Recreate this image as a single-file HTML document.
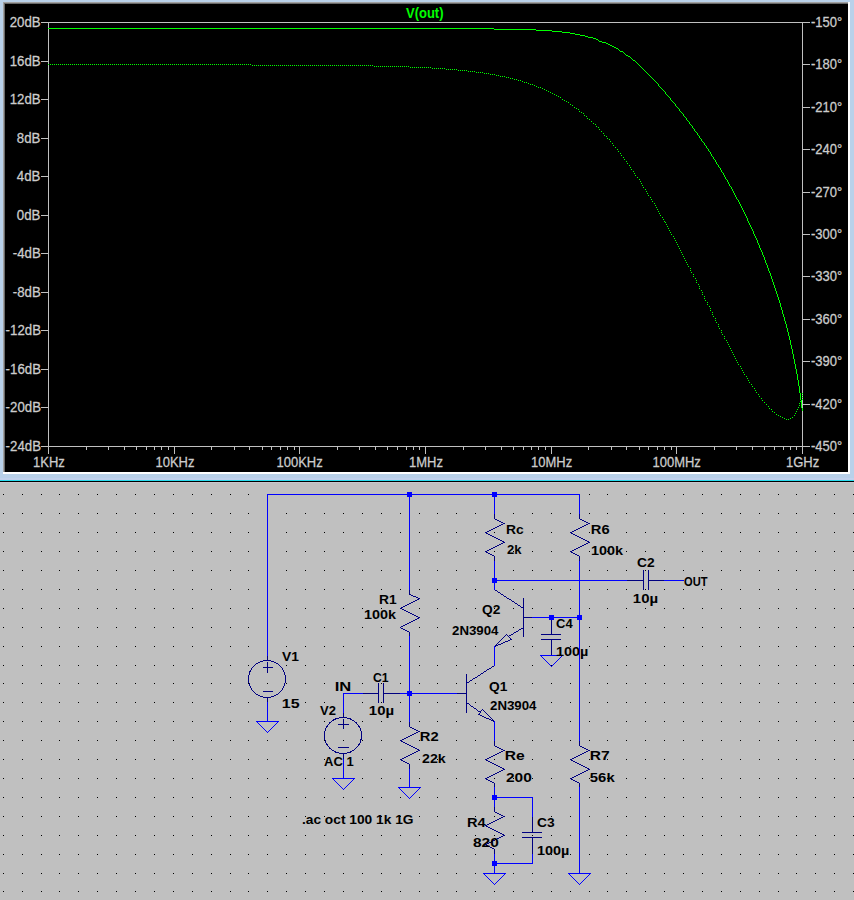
<!DOCTYPE html>
<html><head><meta charset="utf-8"><style>
html,body{margin:0;padding:0;width:854px;height:900px;overflow:hidden;background:#b9d1ea}
svg{display:block}
.ax{font-family:"Liberation Sans",sans-serif;font-size:13px;fill:#cccccc;stroke:#cccccc;stroke-width:0.25px}
.title{font-family:"Liberation Sans",sans-serif;font-size:13px;font-weight:bold;fill:#00ff00}
.sc{font-family:"Liberation Sans",sans-serif;font-size:13px;font-weight:bold;fill:#000}
</style></head><body>
<svg width="854" height="900" viewBox="0 0 854 900">
<rect x="0" y="0" width="854" height="900" fill="#b9d1ea"/><rect x="3" y="2" width="847" height="472" fill="#ffffff"/><rect x="3" y="2" width="845" height="470" fill="#a0a0a0"/><rect x="4" y="3" width="844" height="469" fill="#696969"/><rect x="5" y="4" width="843" height="468" fill="#000000"/><rect x="0" y="478" width="854" height="2" fill="#c2d2ee"/><rect x="0" y="480" width="854" height="1" fill="#28dcef"/><rect x="0" y="481" width="854" height="1" fill="#000000"/><rect x="0" y="482" width="854" height="418" fill="#c0c0c0"/><rect x="0" y="482" width="854" height="1" fill="#c8c8d0"/><rect x="41" y="22" width="769" height="1" fill="#c0c0c0"/><rect x="41" y="446" width="769" height="1" fill="#c0c0c0"/><rect x="48" y="22" width="1" height="432" fill="#c0c0c0"/><rect x="802" y="22" width="1" height="432" fill="#c0c0c0"/><rect x="41" y="22" width="7" height="1" fill="#c0c0c0"/><rect x="41" y="61" width="7" height="1" fill="#c0c0c0"/><rect x="41" y="99" width="7" height="1" fill="#c0c0c0"/><rect x="41" y="138" width="7" height="1" fill="#c0c0c0"/><rect x="41" y="176" width="7" height="1" fill="#c0c0c0"/><rect x="41" y="215" width="7" height="1" fill="#c0c0c0"/><rect x="41" y="253" width="7" height="1" fill="#c0c0c0"/><rect x="41" y="292" width="7" height="1" fill="#c0c0c0"/><rect x="41" y="330" width="7" height="1" fill="#c0c0c0"/><rect x="41" y="369" width="7" height="1" fill="#c0c0c0"/><rect x="41" y="407" width="7" height="1" fill="#c0c0c0"/><rect x="41" y="446" width="7" height="1" fill="#c0c0c0"/><rect x="803" y="22" width="7" height="1" fill="#c0c0c0"/><rect x="803" y="64" width="7" height="1" fill="#c0c0c0"/><rect x="803" y="107" width="7" height="1" fill="#c0c0c0"/><rect x="803" y="149" width="7" height="1" fill="#c0c0c0"/><rect x="803" y="192" width="7" height="1" fill="#c0c0c0"/><rect x="803" y="234" width="7" height="1" fill="#c0c0c0"/><rect x="803" y="276" width="7" height="1" fill="#c0c0c0"/><rect x="803" y="319" width="7" height="1" fill="#c0c0c0"/><rect x="803" y="361" width="7" height="1" fill="#c0c0c0"/><rect x="803" y="404" width="7" height="1" fill="#c0c0c0"/><rect x="803" y="446" width="7" height="1" fill="#c0c0c0"/><rect x="48" y="446" width="1" height="8" fill="#c0c0c0"/><rect x="86" y="447" width="1" height="3" fill="#c0c0c0"/><rect x="108" y="447" width="1" height="3" fill="#c0c0c0"/><rect x="124" y="447" width="1" height="3" fill="#c0c0c0"/><rect x="136" y="447" width="1" height="3" fill="#c0c0c0"/><rect x="146" y="447" width="1" height="3" fill="#c0c0c0"/><rect x="154" y="447" width="1" height="3" fill="#c0c0c0"/><rect x="161" y="447" width="1" height="3" fill="#c0c0c0"/><rect x="168" y="447" width="1" height="3" fill="#c0c0c0"/><rect x="174" y="446" width="1" height="8" fill="#c0c0c0"/><rect x="211" y="447" width="1" height="3" fill="#c0c0c0"/><rect x="234" y="447" width="1" height="3" fill="#c0c0c0"/><rect x="249" y="447" width="1" height="3" fill="#c0c0c0"/><rect x="262" y="447" width="1" height="3" fill="#c0c0c0"/><rect x="271" y="447" width="1" height="3" fill="#c0c0c0"/><rect x="280" y="447" width="1" height="3" fill="#c0c0c0"/><rect x="287" y="447" width="1" height="3" fill="#c0c0c0"/><rect x="294" y="447" width="1" height="3" fill="#c0c0c0"/><rect x="299" y="446" width="1" height="8" fill="#c0c0c0"/><rect x="337" y="447" width="1" height="3" fill="#c0c0c0"/><rect x="359" y="447" width="1" height="3" fill="#c0c0c0"/><rect x="375" y="447" width="1" height="3" fill="#c0c0c0"/><rect x="387" y="447" width="1" height="3" fill="#c0c0c0"/><rect x="397" y="447" width="1" height="3" fill="#c0c0c0"/><rect x="406" y="447" width="1" height="3" fill="#c0c0c0"/><rect x="413" y="447" width="1" height="3" fill="#c0c0c0"/><rect x="419" y="447" width="1" height="3" fill="#c0c0c0"/><rect x="425" y="446" width="1" height="8" fill="#c0c0c0"/><rect x="463" y="447" width="1" height="3" fill="#c0c0c0"/><rect x="485" y="447" width="1" height="3" fill="#c0c0c0"/><rect x="501" y="447" width="1" height="3" fill="#c0c0c0"/><rect x="513" y="447" width="1" height="3" fill="#c0c0c0"/><rect x="523" y="447" width="1" height="3" fill="#c0c0c0"/><rect x="531" y="447" width="1" height="3" fill="#c0c0c0"/><rect x="538" y="447" width="1" height="3" fill="#c0c0c0"/><rect x="545" y="447" width="1" height="3" fill="#c0c0c0"/><rect x="551" y="446" width="1" height="8" fill="#c0c0c0"/><rect x="588" y="447" width="1" height="3" fill="#c0c0c0"/><rect x="611" y="447" width="1" height="3" fill="#c0c0c0"/><rect x="626" y="447" width="1" height="3" fill="#c0c0c0"/><rect x="639" y="447" width="1" height="3" fill="#c0c0c0"/><rect x="648" y="447" width="1" height="3" fill="#c0c0c0"/><rect x="657" y="447" width="1" height="3" fill="#c0c0c0"/><rect x="664" y="447" width="1" height="3" fill="#c0c0c0"/><rect x="671" y="447" width="1" height="3" fill="#c0c0c0"/><rect x="676" y="446" width="1" height="8" fill="#c0c0c0"/><rect x="714" y="447" width="1" height="3" fill="#c0c0c0"/><rect x="736" y="447" width="1" height="3" fill="#c0c0c0"/><rect x="752" y="447" width="1" height="3" fill="#c0c0c0"/><rect x="764" y="447" width="1" height="3" fill="#c0c0c0"/><rect x="774" y="447" width="1" height="3" fill="#c0c0c0"/><rect x="783" y="447" width="1" height="3" fill="#c0c0c0"/><rect x="790" y="447" width="1" height="3" fill="#c0c0c0"/><rect x="796" y="447" width="1" height="3" fill="#c0c0c0"/><rect x="802" y="446" width="1" height="8" fill="#c0c0c0"/><path d="M48 64h1v1h-1zM50 64h1v1h-1zM52 64h1v1h-1zM54 64h1v1h-1zM56 64h1v1h-1zM58 64h1v1h-1zM60 64h1v1h-1zM62 64h1v1h-1zM64 64h1v1h-1zM66 64h1v1h-1zM68 64h1v1h-1zM70 64h1v1h-1zM72 64h1v1h-1zM74 64h1v1h-1zM76 64h1v1h-1zM78 64h1v1h-1zM80 64h1v1h-1zM82 64h1v1h-1zM84 64h1v1h-1zM86 64h1v1h-1zM88 64h1v1h-1zM90 64h1v1h-1zM92 64h1v1h-1zM94 64h1v1h-1zM96 64h1v1h-1zM98 64h1v1h-1zM100 64h1v1h-1zM102 64h1v1h-1zM104 64h1v1h-1zM106 64h1v1h-1zM108 64h1v1h-1zM110 64h1v1h-1zM112 64h1v1h-1zM114 64h1v1h-1zM116 64h1v1h-1zM118 64h1v1h-1zM120 64h1v1h-1zM122 64h1v1h-1zM124 64h1v1h-1zM126 64h1v1h-1zM128 64h1v1h-1zM130 64h1v1h-1zM132 64h1v1h-1zM134 64h1v1h-1zM136 64h1v1h-1zM138 64h1v1h-1zM140 64h1v1h-1zM142 64h1v1h-1zM144 64h1v1h-1zM146 64h1v1h-1zM148 64h1v1h-1zM150 64h1v1h-1zM152 64h1v1h-1zM154 64h1v1h-1zM156 64h1v1h-1zM158 64h1v1h-1zM160 64h1v1h-1zM162 64h1v1h-1zM164 64h1v1h-1zM166 64h1v1h-1zM168 64h1v1h-1zM170 64h1v1h-1zM172 64h1v1h-1zM174 64h1v1h-1zM176 64h1v1h-1zM178 64h1v1h-1zM180 64h1v1h-1zM182 64h1v1h-1zM184 64h1v1h-1zM186 64h1v1h-1zM188 64h1v1h-1zM190 64h1v1h-1zM192 64h1v1h-1zM194 64h1v1h-1zM196 64h1v1h-1zM198 64h1v1h-1zM200 64h1v1h-1zM202 64h1v1h-1zM204 64h1v1h-1zM206 64h1v1h-1zM208 64h1v1h-1zM210 64h1v1h-1zM212 64h1v1h-1zM214 64h1v1h-1zM216 64h1v1h-1zM218 64h1v1h-1zM220 64h1v1h-1zM222 64h1v1h-1zM224 64h1v1h-1zM226 64h1v1h-1zM228 64h1v1h-1zM230 64h1v1h-1zM232 64h1v1h-1zM234 64h1v1h-1zM236 64h1v1h-1zM238 64h1v1h-1zM240 64h1v1h-1zM242 64h1v1h-1zM244 64h1v1h-1zM246 64h1v1h-1zM248 64h1v1h-1zM250 64h1v1h-1zM252 65h1v1h-1zM254 65h1v1h-1zM256 65h1v1h-1zM258 65h1v1h-1zM260 65h1v1h-1zM262 65h1v1h-1zM264 65h1v1h-1zM266 65h1v1h-1zM268 65h1v1h-1zM270 65h1v1h-1zM272 65h1v1h-1zM274 65h1v1h-1zM276 65h1v1h-1zM278 65h1v1h-1zM280 65h1v1h-1zM282 65h1v1h-1zM284 65h1v1h-1zM286 65h1v1h-1zM288 65h1v1h-1zM290 65h1v1h-1zM292 65h1v1h-1zM294 65h1v1h-1zM296 65h1v1h-1zM298 65h1v1h-1zM300 65h1v1h-1zM302 65h1v1h-1zM304 65h1v1h-1zM306 65h1v1h-1zM308 65h1v1h-1zM310 65h1v1h-1zM312 65h1v1h-1zM314 65h1v1h-1zM316 65h1v1h-1zM318 65h1v1h-1zM320 65h1v1h-1zM322 65h1v1h-1zM324 65h1v1h-1zM326 65h1v1h-1zM328 65h1v1h-1zM330 65h1v1h-1zM332 65h1v1h-1zM334 65h1v1h-1zM336 65h1v1h-1zM338 65h1v1h-1zM340 65h1v1h-1zM342 65h1v1h-1zM344 65h1v1h-1zM346 65h1v1h-1zM348 65h1v1h-1zM350 65h1v1h-1zM352 65h1v1h-1zM354 65h1v1h-1zM356 65h1v1h-1zM358 65h1v1h-1zM360 65h1v1h-1zM362 65h1v1h-1zM364 65h1v1h-1zM366 65h1v1h-1zM368 65h1v1h-1zM370 65h1v1h-1zM372 65h1v1h-1zM374 66h1v1h-1zM376 66h1v1h-1zM378 66h1v1h-1zM380 66h1v1h-1zM382 66h1v1h-1zM384 66h1v1h-1zM386 66h1v1h-1zM388 66h1v1h-1zM390 66h1v1h-1zM392 66h1v1h-1zM394 66h1v1h-1zM396 66h1v1h-1zM398 66h1v1h-1zM400 66h1v1h-1zM402 66h1v1h-1zM404 66h1v1h-1zM406 66h1v1h-1zM408 66h1v1h-1zM410 67h1v1h-1zM412 67h1v1h-1zM414 67h1v1h-1zM416 67h1v1h-1zM418 67h1v1h-1zM420 67h1v1h-1zM422 67h1v1h-1zM424 67h1v1h-1zM426 67h1v1h-1zM428 67h1v1h-1zM430 67h1v1h-1zM432 68h1v1h-1zM434 68h1v1h-1zM436 68h1v1h-1zM438 68h1v1h-1zM440 68h1v1h-1zM442 68h1v1h-1zM444 68h1v1h-1zM446 69h1v1h-1zM448 69h1v1h-1zM450 69h1v1h-1zM452 69h1v1h-1zM454 69h1v1h-1zM456 69h1v1h-1zM458 70h1v1h-1zM460 70h1v1h-1zM462 70h1v1h-1zM464 70h1v1h-1zM466 70h1v1h-1zM468 71h1v1h-1zM470 71h1v1h-1zM472 71h1v1h-1zM474 71h1v1h-1zM476 72h1v1h-1zM478 72h1v1h-1zM480 72h1v1h-1zM482 72h1v1h-1zM484 73h1v1h-1zM486 73h1v1h-1zM488 73h1v1h-1zM490 74h1v1h-1zM492 74h1v1h-1zM494 74h1v1h-1zM496 75h1v1h-1zM498 75h1v1h-1zM500 76h1v1h-1zM502 76h1v1h-1zM504 76h1v1h-1zM506 77h1v1h-1zM508 77h1v1h-1zM510 78h1v1h-1zM512 78h1v1h-1zM514 79h1v1h-1zM516 79h1v1h-1zM518 80h1v1h-1zM520 80h1v1h-1zM522 81h1v1h-1zM524 82h1v1h-1zM526 82h1v1h-1zM528 83h1v1h-1zM530 84h1v1h-1zM532 84h1v1h-1zM534 85h1v1h-1zM536 86h1v1h-1zM538 87h1v1h-1zM540 87h1v1h-1zM542 88h1v1h-1zM544 89h1v1h-1zM546 90h1v1h-1zM548 91h1v1h-1zM550 92h1v1h-1zM552 93h1v1h-1zM554 94h1v1h-1zM556 95h1v1h-1zM558 96h1v1h-1zM560 97h1v1h-1zM562 99h1v1h-1zM564 100h1v1h-1zM566 101h1v1h-1zM568 102h1v1h-1zM570 104h1v1h-1zM572 105h1v1h-1zM574 107h1v1h-1zM576 108h1v1h-1zM578 109h1v1h-1zM579 111h1v1h-1zM581 112h1v1h-1zM583 113h1v1h-1zM584 115h1v1h-1zM586 116h1v1h-1zM587 118h1v1h-1zM589 119h1v1h-1zM591 121h1v1h-1zM593 123h1v1h-1zM595 124h1v1h-1zM596 126h1v1h-1zM598 127h1v1h-1zM599 129h1v1h-1zM601 131h1v1h-1zM603 133h1v1h-1zM604 135h1v1h-1zM606 136h1v1h-1zM607 138h1v1h-1zM609 139h1v1h-1zM610 141h1v1h-1zM612 143h1v1h-1zM613 145h1v1h-1zM615 147h1v1h-1zM617 149h1v1h-1zM618 151h1v1h-1zM620 153h1v1h-1zM621 155h1v1h-1zM623 157h1v1h-1zM624 159h1v1h-1zM626 161h1v1h-1zM627 163h1v1h-1zM629 165h1v1h-1zM630 167h1v1h-1zM631 169h1v1h-1zM633 171h1v1h-1zM634 173h1v1h-1zM635 175h1v1h-1zM637 177h1v1h-1zM639 179h1v1h-1zM640 181h1v1h-1zM641 183h1v1h-1zM642 185h1v1h-1zM643 187h1v1h-1zM645 189h1v1h-1zM646 191h1v1h-1zM647 193h1v1h-1zM648 195h1v1h-1zM650 197h1v1h-1zM651 199h1v1h-1zM652 201h1v1h-1zM654 203h1v1h-1zM655 205h1v1h-1zM656 207h1v1h-1zM657 209h1v1h-1zM658 211h1v1h-1zM659 213h1v1h-1zM660 215h1v1h-1zM662 217h1v1h-1zM663 219h1v1h-1zM664 221h1v1h-1zM665 222h1v1h-1zM666 224h1v1h-1zM667 226h1v1h-1zM668 228h1v1h-1zM669 230h1v1h-1zM670 232h1v1h-1zM671 234h1v1h-1zM673 236h1v1h-1zM674 238h1v1h-1zM675 240h1v1h-1zM676 242h1v1h-1zM677 244h1v1h-1zM678 246h1v1h-1zM679 248h1v1h-1zM680 250h1v1h-1zM681 252h1v1h-1zM682 254h1v1h-1zM683 256h1v1h-1zM684 258h1v1h-1zM685 260h1v1h-1zM686 262h1v1h-1zM687 264h1v1h-1zM688 266h1v1h-1zM690 268h1v1h-1zM690 270h1v1h-1zM691 272h1v1h-1zM693 274h1v1h-1zM693 276h1v1h-1zM695 278h1v1h-1zM696 280h1v1h-1zM696 282h1v1h-1zM698 284h1v1h-1zM699 286h1v1h-1zM699 288h1v1h-1zM701 290h1v1h-1zM702 292h1v1h-1zM702 294h1v1h-1zM704 296h1v1h-1zM704 298h1v1h-1zM705 300h1v1h-1zM707 302h1v1h-1zM707 304h1v1h-1zM709 306h1v1h-1zM710 308h1v1h-1zM710 310h1v1h-1zM712 312h1v1h-1zM712 314h1v1h-1zM713 316h1v1h-1zM715 318h1v1h-1zM715 320h1v1h-1zM716 322h1v1h-1zM718 324h1v1h-1zM718 326h1v1h-1zM719 328h1v1h-1zM721 330h1v1h-1zM721 332h1v1h-1zM722 334h1v1h-1zM724 336h1v1h-1zM724 338h1v1h-1zM726 340h1v1h-1zM727 342h1v1h-1zM728 344h1v1h-1zM729 346h1v1h-1zM730 348h1v1h-1zM731 350h1v1h-1zM732 352h1v1h-1zM733 354h1v1h-1zM734 356h1v1h-1zM735 358h1v1h-1zM736 360h1v1h-1zM737 362h1v1h-1zM738 364h1v1h-1zM740 366h1v1h-1zM741 368h1v1h-1zM742 370h1v1h-1zM743 372h1v1h-1zM744 374h1v1h-1zM746 376h1v1h-1zM747 378h1v1h-1zM748 380h1v1h-1zM749 382h1v1h-1zM751 384h1v1h-1zM752 386h1v1h-1zM754 388h1v1h-1zM755 390h1v1h-1zM756 392h1v1h-1zM802 393h1v1h-1zM758 394h1v1h-1zM802 395h1v1h-1zM759 396h1v1h-1zM802 397h1v1h-1zM761 398h1v1h-1zM802 399h1v1h-1zM762 400h1v1h-1zM800 401h1v1h-1zM764 402h1v1h-1zM799 403h1v1h-1zM766 404h1v1h-1zM799 405h1v1h-1zM768 406h1v1h-1zM798 407h1v1h-1zM769 408h1v1h-1zM771 409h1v1h-1zM797 409h1v1h-1zM772 411h1v1h-1zM796 411h1v1h-1zM774 412h1v1h-1zM795 413h1v1h-1zM776 414h1v1h-1zM778 415h1v1h-1zM794 415h1v1h-1zM780 416h1v1h-1zM782 417h1v1h-1zM792 417h1v1h-1zM784 418h1v1h-1zM790 418h1v1h-1zM786 419h1v1h-1zM788 419h1v1h-1z" fill="#00ff00"/><path d="M48 28h446v1h-446zM494 29h42v1h-42zM536 30h16v1h-16zM552 31h10v1h-10zM562 32h8v1h-8zM570 33h5v1h-5zM575 34h5v1h-5zM580 35h5v1h-5zM585 36h3v1h-3zM588 37h5v1h-5zM593 38h3v1h-3zM596 39h2v1h-2zM598 40h1v1h-1zM599 41h3v1h-3zM602 42h4v1h-4zM606 43h2v1h-2zM608 44h2v1h-2zM610 45h2v1h-2zM612 46h2v1h-2zM614 47h2v1h-2zM616 48h2v1h-2zM618 49h1v1h-1zM619 50h1v1h-1zM620 51h3v1h-3zM623 52h1v1h-1zM624 53h1v1h-1zM625 54h1v1h-1zM626 55h2v1h-2zM628 56h2v1h-2zM630 57h1v1h-1zM631 58h1v1h-1zM632 59h1v1h-1zM633 60h2v1h-2zM635 61h1v1h-1zM636 62h1v1h-1zM637 63h1v1h-1zM638 64h1v1h-1zM639 65h1v1h-1zM640 66h1v1h-1zM641 67h1v1h-1zM642 68h1v1h-1zM643 69h1v1h-1zM644 70h1v1h-1zM645 71h1v1h-1zM646 72h1v1h-1zM647 73h1v1h-1zM648 74h1v1h-1zM649 75h1v1h-1zM650 76h1v1h-1zM651 77h1v1h-1zM652 78h1v1h-1zM653 79h1v1h-1zM654 80h1v1h-1zM655 81h1v1h-1zM656 82h1v1h-1zM657 83h1v1h-1zM658 84h1v1h-1zM658 85h1v1h-1zM659 86h1v1h-1zM660 87h1v1h-1zM661 88h1v1h-1zM662 89h1v1h-1zM663 90h1v1h-1zM664 91h1v1h-1zM665 92h1v1h-1zM665 93h1v1h-1zM666 94h1v1h-1zM667 95h1v1h-1zM668 96h1v1h-1zM669 97h1v1h-1zM670 98h1v1h-1zM670 99h1v1h-1zM671 100h1v1h-1zM672 101h1v1h-1zM673 102h1v1h-1zM674 103h1v1h-1zM675 104h1v1h-1zM675 105h1v1h-1zM676 106h1v1h-1zM677 107h1v1h-1zM678 108h1v1h-1zM679 109h1v1h-1zM679 110h1v1h-1zM680 111h1v1h-1zM681 112h1v1h-1zM682 113h1v1h-1zM683 114h1v1h-1zM683 115h1v1h-1zM684 116h1v1h-1zM685 117h1v1h-1zM686 118h1v1h-1zM686 119h1v1h-1zM687 120h1v1h-1zM688 121h1v1h-1zM689 122h1v1h-1zM689 123h1v1h-1zM690 124h1v1h-1zM691 125h1v1h-1zM692 126h1v1h-1zM692 127h1v1h-1zM693 128h1v1h-1zM694 129h1v1h-1zM694 130h1v1h-1zM695 131h1v1h-1zM696 132h1v1h-1zM697 133h1v1h-1zM697 134h1v1h-1zM698 135h1v1h-1zM699 136h1v1h-1zM699 137h1v1h-1zM700 138h1v1h-1zM701 139h1v1h-1zM701 140h1v1h-1zM702 141h1v1h-1zM703 142h1v1h-1zM704 143h1v1h-1zM704 144h1v1h-1zM705 145h1v1h-1zM706 146h1v1h-1zM706 147h1v1h-1zM707 148h1v1h-1zM708 149h1v1h-1zM708 150h1v1h-1zM709 151h1v1h-1zM710 152h1v1h-1zM710 153h1v1h-1zM711 154h1v1h-1zM711 155h1v1h-1zM712 156h1v1h-1zM713 157h1v1h-1zM713 158h1v1h-1zM714 159h1v1h-1zM715 160h1v1h-1zM715 161h1v1h-1zM716 162h1v1h-1zM716 163h1v1h-1zM717 164h1v1h-1zM718 165h1v1h-1zM718 166h1v1h-1zM719 167h1v1h-1zM720 168h1v1h-1zM720 169h1v1h-1zM721 170h1v1h-1zM721 171h1v1h-1zM722 172h1v1h-1zM723 173h1v1h-1zM723 174h1v1h-1zM724 175h1v1h-1zM724 176h1v1h-1zM725 177h1v1h-1zM725 178h1v1h-1zM726 179h1v1h-1zM727 180h1v1h-1zM727 181h1v1h-1zM728 182h1v1h-1zM728 183h1v1h-1zM729 184h1v1h-1zM729 185h1v1h-1zM730 186h1v1h-1zM731 187h1v1h-1zM731 188h1v1h-1zM732 189h1v1h-1zM732 190h1v1h-1zM733 191h1v1h-1zM733 192h1v1h-1zM734 193h1v1h-1zM734 194h1v1h-1zM735 195h1v1h-1zM735 196h1v1h-1zM736 197h1v1h-1zM736 198h1v1h-1zM737 199h1v1h-1zM738 200h1v1h-1zM738 201h1v1h-1zM739 202h1v1h-1zM739 203h1v1h-1zM740 204h1v1h-1zM740 205h1v1h-1zM741 206h1v1h-1zM741 207h1v1h-1zM742 208h1v1h-1zM742 209h1v1h-1zM743 210h1v1h-1zM743 211h1v1h-1zM744 212h1v1h-1zM744 213h1v1h-1zM745 214h1v1h-1zM745 215h1v1h-1zM746 216h1v1h-1zM746 217h1v1h-1zM747 218h1v1h-1zM747 219h1v1h-1zM747 220h1v1h-1zM748 221h1v1h-1zM748 222h1v1h-1zM749 223h1v1h-1zM749 224h1v1h-1zM750 225h1v1h-1zM750 226h1v1h-1zM751 227h1v1h-1zM751 228h1v1h-1zM752 229h1v1h-1zM752 230h1v1h-1zM753 231h1v1h-1zM753 232h1v1h-1zM753 233h1v1h-1zM754 234h1v1h-1zM754 235h1v1h-1zM755 236h1v1h-1zM755 237h1v1h-1zM756 238h1v1h-1zM756 239h1v1h-1zM757 240h1v1h-1zM757 241h1v1h-1zM757 242h1v1h-1zM758 243h1v1h-1zM758 244h1v1h-1zM759 245h1v1h-1zM759 246h1v1h-1zM759 247h1v1h-1zM760 248h1v1h-1zM760 249h1v1h-1zM761 250h1v1h-1zM761 251h1v1h-1zM762 252h1v1h-1zM762 253h1v1h-1zM762 254h1v1h-1zM763 255h1v1h-1zM763 256h1v1h-1zM764 257h1v1h-1zM764 258h1v1h-1zM764 259h1v1h-1zM765 260h1v1h-1zM765 261h1v1h-1zM765 262h1v1h-1zM766 263h1v1h-1zM766 264h1v1h-1zM767 265h1v1h-1zM767 266h1v1h-1zM767 267h1v1h-1zM768 268h1v1h-1zM768 269h1v1h-1zM768 270h1v1h-1zM769 271h1v1h-1zM769 272h1v1h-1zM770 273h1v1h-1zM770 274h1v1h-1zM770 275h1v1h-1zM771 276h1v1h-1zM771 277h1v1h-1zM771 278h1v1h-1zM772 279h1v1h-1zM772 280h1v1h-1zM772 281h1v1h-1zM773 282h1v1h-1zM773 283h1v1h-1zM773 284h1v1h-1zM774 285h1v1h-1zM774 286h1v1h-1zM774 287h1v1h-1zM775 288h1v1h-1zM775 289h1v1h-1zM775 290h1v1h-1zM776 291h1v1h-1zM776 292h1v1h-1zM776 293h1v1h-1zM777 294h1v1h-1zM777 295h1v1h-1zM777 296h1v1h-1zM778 297h1v1h-1zM778 298h1v1h-1zM778 299h1v1h-1zM779 300h1v1h-1zM779 301h1v1h-1zM779 302h1v1h-1zM780 303h1v1h-1zM780 304h1v1h-1zM780 305h1v1h-1zM780 306h1v1h-1zM781 307h1v1h-1zM781 308h1v1h-1zM781 309h1v1h-1zM782 310h1v1h-1zM782 311h1v1h-1zM782 312h1v1h-1zM782 313h1v1h-1zM783 314h1v1h-1zM783 315h1v1h-1zM783 316h1v1h-1zM784 317h1v1h-1zM784 318h1v1h-1zM784 319h1v1h-1zM784 320h1v1h-1zM785 321h1v1h-1zM785 322h1v1h-1zM785 323h1v1h-1zM786 324h1v1h-1zM786 325h1v1h-1zM786 326h1v1h-1zM786 327h1v1h-1zM787 328h1v1h-1zM787 329h1v1h-1zM787 330h1v1h-1zM787 331h1v1h-1zM788 332h1v1h-1zM788 333h1v1h-1zM788 334h1v1h-1zM788 335h1v1h-1zM789 336h1v1h-1zM789 337h1v1h-1zM789 338h1v1h-1zM789 339h1v1h-1zM790 340h1v1h-1zM790 341h1v1h-1zM790 342h1v1h-1zM790 343h1v1h-1zM790 344h1v1h-1zM791 345h1v1h-1zM791 346h1v1h-1zM791 347h1v1h-1zM791 348h1v1h-1zM792 349h1v1h-1zM792 350h1v1h-1zM792 351h1v1h-1zM792 352h1v1h-1zM792 353h1v1h-1zM793 354h1v1h-1zM793 355h1v1h-1zM793 356h1v1h-1zM793 357h1v1h-1zM793 358h1v1h-1zM794 359h1v1h-1zM794 360h1v1h-1zM794 361h1v1h-1zM794 362h1v1h-1zM794 363h1v1h-1zM795 364h1v1h-1zM795 365h1v1h-1zM795 366h1v1h-1zM795 367h1v1h-1zM795 368h1v1h-1zM796 369h1v1h-1zM796 370h1v1h-1zM796 371h1v1h-1zM796 372h1v1h-1zM796 373h1v1h-1zM797 374h1v1h-1zM797 375h1v1h-1zM797 376h1v1h-1zM797 377h1v1h-1zM797 378h1v1h-1zM797 379h1v1h-1zM798 380h1v1h-1zM798 381h1v1h-1zM798 382h1v1h-1zM798 383h1v1h-1zM798 384h1v1h-1zM798 385h1v1h-1zM799 386h1v1h-1zM799 387h1v1h-1zM799 388h1v1h-1zM799 389h1v1h-1zM799 390h1v1h-1zM799 391h1v1h-1zM799 392h1v1h-1zM800 393h1v1h-1zM800 394h1v1h-1zM800 395h1v1h-1zM800 396h1v1h-1zM800 397h1v1h-1zM800 398h1v1h-1zM800 399h1v1h-1zM801 400h1v1h-1zM801 401h1v1h-1zM801 402h1v1h-1zM801 403h1v1h-1zM801 404h1v1h-1zM801 405h1v1h-1zM801 406h1v1h-1zM801 407h1v1h-1zM802 408h1v1h-1zM802 409h1v1h-1zM802 410h1v1h-1z" fill="#00ff00"/><path d="M3 494h1v1h-1zM22 494h1v1h-1zM41 494h1v1h-1zM59 494h1v1h-1zM78 494h1v1h-1zM97 494h1v1h-1zM116 494h1v1h-1zM135 494h1v1h-1zM154 494h1v1h-1zM173 494h1v1h-1zM192 494h1v1h-1zM211 494h1v1h-1zM230 494h1v1h-1zM248 494h1v1h-1zM267 494h1v1h-1zM286 494h1v1h-1zM305 494h1v1h-1zM324 494h1v1h-1zM343 494h1v1h-1zM362 494h1v1h-1zM381 494h1v1h-1zM400 494h1v1h-1zM419 494h1v1h-1zM437 494h1v1h-1zM456 494h1v1h-1zM475 494h1v1h-1zM494 494h1v1h-1zM513 494h1v1h-1zM532 494h1v1h-1zM551 494h1v1h-1zM570 494h1v1h-1zM589 494h1v1h-1zM607 494h1v1h-1zM626 494h1v1h-1zM645 494h1v1h-1zM664 494h1v1h-1zM683 494h1v1h-1zM702 494h1v1h-1zM721 494h1v1h-1zM740 494h1v1h-1zM759 494h1v1h-1zM778 494h1v1h-1zM796 494h1v1h-1zM815 494h1v1h-1zM834 494h1v1h-1zM853 494h1v1h-1zM3 513h1v1h-1zM22 513h1v1h-1zM41 513h1v1h-1zM59 513h1v1h-1zM78 513h1v1h-1zM97 513h1v1h-1zM116 513h1v1h-1zM135 513h1v1h-1zM154 513h1v1h-1zM173 513h1v1h-1zM192 513h1v1h-1zM211 513h1v1h-1zM230 513h1v1h-1zM248 513h1v1h-1zM267 513h1v1h-1zM286 513h1v1h-1zM305 513h1v1h-1zM324 513h1v1h-1zM343 513h1v1h-1zM362 513h1v1h-1zM381 513h1v1h-1zM400 513h1v1h-1zM419 513h1v1h-1zM437 513h1v1h-1zM456 513h1v1h-1zM475 513h1v1h-1zM494 513h1v1h-1zM513 513h1v1h-1zM532 513h1v1h-1zM551 513h1v1h-1zM570 513h1v1h-1zM589 513h1v1h-1zM607 513h1v1h-1zM626 513h1v1h-1zM645 513h1v1h-1zM664 513h1v1h-1zM683 513h1v1h-1zM702 513h1v1h-1zM721 513h1v1h-1zM740 513h1v1h-1zM759 513h1v1h-1zM778 513h1v1h-1zM796 513h1v1h-1zM815 513h1v1h-1zM834 513h1v1h-1zM853 513h1v1h-1zM3 532h1v1h-1zM22 532h1v1h-1zM41 532h1v1h-1zM59 532h1v1h-1zM78 532h1v1h-1zM97 532h1v1h-1zM116 532h1v1h-1zM135 532h1v1h-1zM154 532h1v1h-1zM173 532h1v1h-1zM192 532h1v1h-1zM211 532h1v1h-1zM230 532h1v1h-1zM248 532h1v1h-1zM267 532h1v1h-1zM286 532h1v1h-1zM305 532h1v1h-1zM324 532h1v1h-1zM343 532h1v1h-1zM362 532h1v1h-1zM381 532h1v1h-1zM400 532h1v1h-1zM419 532h1v1h-1zM437 532h1v1h-1zM456 532h1v1h-1zM475 532h1v1h-1zM494 532h1v1h-1zM513 532h1v1h-1zM532 532h1v1h-1zM551 532h1v1h-1zM570 532h1v1h-1zM589 532h1v1h-1zM607 532h1v1h-1zM626 532h1v1h-1zM645 532h1v1h-1zM664 532h1v1h-1zM683 532h1v1h-1zM702 532h1v1h-1zM721 532h1v1h-1zM740 532h1v1h-1zM759 532h1v1h-1zM778 532h1v1h-1zM796 532h1v1h-1zM815 532h1v1h-1zM834 532h1v1h-1zM853 532h1v1h-1zM3 551h1v1h-1zM22 551h1v1h-1zM41 551h1v1h-1zM59 551h1v1h-1zM78 551h1v1h-1zM97 551h1v1h-1zM116 551h1v1h-1zM135 551h1v1h-1zM154 551h1v1h-1zM173 551h1v1h-1zM192 551h1v1h-1zM211 551h1v1h-1zM230 551h1v1h-1zM248 551h1v1h-1zM267 551h1v1h-1zM286 551h1v1h-1zM305 551h1v1h-1zM324 551h1v1h-1zM343 551h1v1h-1zM362 551h1v1h-1zM381 551h1v1h-1zM400 551h1v1h-1zM419 551h1v1h-1zM437 551h1v1h-1zM456 551h1v1h-1zM475 551h1v1h-1zM494 551h1v1h-1zM513 551h1v1h-1zM532 551h1v1h-1zM551 551h1v1h-1zM570 551h1v1h-1zM589 551h1v1h-1zM607 551h1v1h-1zM626 551h1v1h-1zM645 551h1v1h-1zM664 551h1v1h-1zM683 551h1v1h-1zM702 551h1v1h-1zM721 551h1v1h-1zM740 551h1v1h-1zM759 551h1v1h-1zM778 551h1v1h-1zM796 551h1v1h-1zM815 551h1v1h-1zM834 551h1v1h-1zM853 551h1v1h-1zM3 570h1v1h-1zM22 570h1v1h-1zM41 570h1v1h-1zM59 570h1v1h-1zM78 570h1v1h-1zM97 570h1v1h-1zM116 570h1v1h-1zM135 570h1v1h-1zM154 570h1v1h-1zM173 570h1v1h-1zM192 570h1v1h-1zM211 570h1v1h-1zM230 570h1v1h-1zM248 570h1v1h-1zM267 570h1v1h-1zM286 570h1v1h-1zM305 570h1v1h-1zM324 570h1v1h-1zM343 570h1v1h-1zM362 570h1v1h-1zM381 570h1v1h-1zM400 570h1v1h-1zM419 570h1v1h-1zM437 570h1v1h-1zM456 570h1v1h-1zM475 570h1v1h-1zM494 570h1v1h-1zM513 570h1v1h-1zM532 570h1v1h-1zM551 570h1v1h-1zM570 570h1v1h-1zM589 570h1v1h-1zM607 570h1v1h-1zM626 570h1v1h-1zM645 570h1v1h-1zM664 570h1v1h-1zM683 570h1v1h-1zM702 570h1v1h-1zM721 570h1v1h-1zM740 570h1v1h-1zM759 570h1v1h-1zM778 570h1v1h-1zM796 570h1v1h-1zM815 570h1v1h-1zM834 570h1v1h-1zM853 570h1v1h-1zM3 589h1v1h-1zM22 589h1v1h-1zM41 589h1v1h-1zM59 589h1v1h-1zM78 589h1v1h-1zM97 589h1v1h-1zM116 589h1v1h-1zM135 589h1v1h-1zM154 589h1v1h-1zM173 589h1v1h-1zM192 589h1v1h-1zM211 589h1v1h-1zM230 589h1v1h-1zM248 589h1v1h-1zM267 589h1v1h-1zM286 589h1v1h-1zM305 589h1v1h-1zM324 589h1v1h-1zM343 589h1v1h-1zM362 589h1v1h-1zM381 589h1v1h-1zM400 589h1v1h-1zM419 589h1v1h-1zM437 589h1v1h-1zM456 589h1v1h-1zM475 589h1v1h-1zM494 589h1v1h-1zM513 589h1v1h-1zM532 589h1v1h-1zM551 589h1v1h-1zM570 589h1v1h-1zM589 589h1v1h-1zM607 589h1v1h-1zM626 589h1v1h-1zM645 589h1v1h-1zM664 589h1v1h-1zM683 589h1v1h-1zM702 589h1v1h-1zM721 589h1v1h-1zM740 589h1v1h-1zM759 589h1v1h-1zM778 589h1v1h-1zM796 589h1v1h-1zM815 589h1v1h-1zM834 589h1v1h-1zM853 589h1v1h-1zM3 608h1v1h-1zM22 608h1v1h-1zM41 608h1v1h-1zM59 608h1v1h-1zM78 608h1v1h-1zM97 608h1v1h-1zM116 608h1v1h-1zM135 608h1v1h-1zM154 608h1v1h-1zM173 608h1v1h-1zM192 608h1v1h-1zM211 608h1v1h-1zM230 608h1v1h-1zM248 608h1v1h-1zM267 608h1v1h-1zM286 608h1v1h-1zM305 608h1v1h-1zM324 608h1v1h-1zM343 608h1v1h-1zM362 608h1v1h-1zM381 608h1v1h-1zM400 608h1v1h-1zM419 608h1v1h-1zM437 608h1v1h-1zM456 608h1v1h-1zM475 608h1v1h-1zM494 608h1v1h-1zM513 608h1v1h-1zM532 608h1v1h-1zM551 608h1v1h-1zM570 608h1v1h-1zM589 608h1v1h-1zM607 608h1v1h-1zM626 608h1v1h-1zM645 608h1v1h-1zM664 608h1v1h-1zM683 608h1v1h-1zM702 608h1v1h-1zM721 608h1v1h-1zM740 608h1v1h-1zM759 608h1v1h-1zM778 608h1v1h-1zM796 608h1v1h-1zM815 608h1v1h-1zM834 608h1v1h-1zM853 608h1v1h-1zM3 627h1v1h-1zM22 627h1v1h-1zM41 627h1v1h-1zM59 627h1v1h-1zM78 627h1v1h-1zM97 627h1v1h-1zM116 627h1v1h-1zM135 627h1v1h-1zM154 627h1v1h-1zM173 627h1v1h-1zM192 627h1v1h-1zM211 627h1v1h-1zM230 627h1v1h-1zM248 627h1v1h-1zM267 627h1v1h-1zM286 627h1v1h-1zM305 627h1v1h-1zM324 627h1v1h-1zM343 627h1v1h-1zM362 627h1v1h-1zM381 627h1v1h-1zM400 627h1v1h-1zM419 627h1v1h-1zM437 627h1v1h-1zM456 627h1v1h-1zM475 627h1v1h-1zM494 627h1v1h-1zM513 627h1v1h-1zM532 627h1v1h-1zM551 627h1v1h-1zM570 627h1v1h-1zM589 627h1v1h-1zM607 627h1v1h-1zM626 627h1v1h-1zM645 627h1v1h-1zM664 627h1v1h-1zM683 627h1v1h-1zM702 627h1v1h-1zM721 627h1v1h-1zM740 627h1v1h-1zM759 627h1v1h-1zM778 627h1v1h-1zM796 627h1v1h-1zM815 627h1v1h-1zM834 627h1v1h-1zM853 627h1v1h-1zM3 646h1v1h-1zM22 646h1v1h-1zM41 646h1v1h-1zM59 646h1v1h-1zM78 646h1v1h-1zM97 646h1v1h-1zM116 646h1v1h-1zM135 646h1v1h-1zM154 646h1v1h-1zM173 646h1v1h-1zM192 646h1v1h-1zM211 646h1v1h-1zM230 646h1v1h-1zM248 646h1v1h-1zM267 646h1v1h-1zM286 646h1v1h-1zM305 646h1v1h-1zM324 646h1v1h-1zM343 646h1v1h-1zM362 646h1v1h-1zM381 646h1v1h-1zM400 646h1v1h-1zM419 646h1v1h-1zM437 646h1v1h-1zM456 646h1v1h-1zM475 646h1v1h-1zM494 646h1v1h-1zM513 646h1v1h-1zM532 646h1v1h-1zM551 646h1v1h-1zM570 646h1v1h-1zM589 646h1v1h-1zM607 646h1v1h-1zM626 646h1v1h-1zM645 646h1v1h-1zM664 646h1v1h-1zM683 646h1v1h-1zM702 646h1v1h-1zM721 646h1v1h-1zM740 646h1v1h-1zM759 646h1v1h-1zM778 646h1v1h-1zM796 646h1v1h-1zM815 646h1v1h-1zM834 646h1v1h-1zM853 646h1v1h-1zM3 665h1v1h-1zM22 665h1v1h-1zM41 665h1v1h-1zM59 665h1v1h-1zM78 665h1v1h-1zM97 665h1v1h-1zM116 665h1v1h-1zM135 665h1v1h-1zM154 665h1v1h-1zM173 665h1v1h-1zM192 665h1v1h-1zM211 665h1v1h-1zM230 665h1v1h-1zM248 665h1v1h-1zM267 665h1v1h-1zM286 665h1v1h-1zM305 665h1v1h-1zM324 665h1v1h-1zM343 665h1v1h-1zM362 665h1v1h-1zM381 665h1v1h-1zM400 665h1v1h-1zM419 665h1v1h-1zM437 665h1v1h-1zM456 665h1v1h-1zM475 665h1v1h-1zM494 665h1v1h-1zM513 665h1v1h-1zM532 665h1v1h-1zM551 665h1v1h-1zM570 665h1v1h-1zM589 665h1v1h-1zM607 665h1v1h-1zM626 665h1v1h-1zM645 665h1v1h-1zM664 665h1v1h-1zM683 665h1v1h-1zM702 665h1v1h-1zM721 665h1v1h-1zM740 665h1v1h-1zM759 665h1v1h-1zM778 665h1v1h-1zM796 665h1v1h-1zM815 665h1v1h-1zM834 665h1v1h-1zM853 665h1v1h-1zM3 683h1v1h-1zM22 683h1v1h-1zM41 683h1v1h-1zM59 683h1v1h-1zM78 683h1v1h-1zM97 683h1v1h-1zM116 683h1v1h-1zM135 683h1v1h-1zM154 683h1v1h-1zM173 683h1v1h-1zM192 683h1v1h-1zM211 683h1v1h-1zM230 683h1v1h-1zM248 683h1v1h-1zM267 683h1v1h-1zM286 683h1v1h-1zM305 683h1v1h-1zM324 683h1v1h-1zM343 683h1v1h-1zM362 683h1v1h-1zM381 683h1v1h-1zM400 683h1v1h-1zM419 683h1v1h-1zM437 683h1v1h-1zM456 683h1v1h-1zM475 683h1v1h-1zM494 683h1v1h-1zM513 683h1v1h-1zM532 683h1v1h-1zM551 683h1v1h-1zM570 683h1v1h-1zM589 683h1v1h-1zM607 683h1v1h-1zM626 683h1v1h-1zM645 683h1v1h-1zM664 683h1v1h-1zM683 683h1v1h-1zM702 683h1v1h-1zM721 683h1v1h-1zM740 683h1v1h-1zM759 683h1v1h-1zM778 683h1v1h-1zM796 683h1v1h-1zM815 683h1v1h-1zM834 683h1v1h-1zM853 683h1v1h-1zM3 702h1v1h-1zM22 702h1v1h-1zM41 702h1v1h-1zM59 702h1v1h-1zM78 702h1v1h-1zM97 702h1v1h-1zM116 702h1v1h-1zM135 702h1v1h-1zM154 702h1v1h-1zM173 702h1v1h-1zM192 702h1v1h-1zM211 702h1v1h-1zM230 702h1v1h-1zM248 702h1v1h-1zM267 702h1v1h-1zM286 702h1v1h-1zM305 702h1v1h-1zM324 702h1v1h-1zM343 702h1v1h-1zM362 702h1v1h-1zM381 702h1v1h-1zM400 702h1v1h-1zM419 702h1v1h-1zM437 702h1v1h-1zM456 702h1v1h-1zM475 702h1v1h-1zM494 702h1v1h-1zM513 702h1v1h-1zM532 702h1v1h-1zM551 702h1v1h-1zM570 702h1v1h-1zM589 702h1v1h-1zM607 702h1v1h-1zM626 702h1v1h-1zM645 702h1v1h-1zM664 702h1v1h-1zM683 702h1v1h-1zM702 702h1v1h-1zM721 702h1v1h-1zM740 702h1v1h-1zM759 702h1v1h-1zM778 702h1v1h-1zM796 702h1v1h-1zM815 702h1v1h-1zM834 702h1v1h-1zM853 702h1v1h-1zM3 721h1v1h-1zM22 721h1v1h-1zM41 721h1v1h-1zM59 721h1v1h-1zM78 721h1v1h-1zM97 721h1v1h-1zM116 721h1v1h-1zM135 721h1v1h-1zM154 721h1v1h-1zM173 721h1v1h-1zM192 721h1v1h-1zM211 721h1v1h-1zM230 721h1v1h-1zM248 721h1v1h-1zM267 721h1v1h-1zM286 721h1v1h-1zM305 721h1v1h-1zM324 721h1v1h-1zM343 721h1v1h-1zM362 721h1v1h-1zM381 721h1v1h-1zM400 721h1v1h-1zM419 721h1v1h-1zM437 721h1v1h-1zM456 721h1v1h-1zM475 721h1v1h-1zM494 721h1v1h-1zM513 721h1v1h-1zM532 721h1v1h-1zM551 721h1v1h-1zM570 721h1v1h-1zM589 721h1v1h-1zM607 721h1v1h-1zM626 721h1v1h-1zM645 721h1v1h-1zM664 721h1v1h-1zM683 721h1v1h-1zM702 721h1v1h-1zM721 721h1v1h-1zM740 721h1v1h-1zM759 721h1v1h-1zM778 721h1v1h-1zM796 721h1v1h-1zM815 721h1v1h-1zM834 721h1v1h-1zM853 721h1v1h-1zM3 740h1v1h-1zM22 740h1v1h-1zM41 740h1v1h-1zM59 740h1v1h-1zM78 740h1v1h-1zM97 740h1v1h-1zM116 740h1v1h-1zM135 740h1v1h-1zM154 740h1v1h-1zM173 740h1v1h-1zM192 740h1v1h-1zM211 740h1v1h-1zM230 740h1v1h-1zM248 740h1v1h-1zM267 740h1v1h-1zM286 740h1v1h-1zM305 740h1v1h-1zM324 740h1v1h-1zM343 740h1v1h-1zM362 740h1v1h-1zM381 740h1v1h-1zM400 740h1v1h-1zM419 740h1v1h-1zM437 740h1v1h-1zM456 740h1v1h-1zM475 740h1v1h-1zM494 740h1v1h-1zM513 740h1v1h-1zM532 740h1v1h-1zM551 740h1v1h-1zM570 740h1v1h-1zM589 740h1v1h-1zM607 740h1v1h-1zM626 740h1v1h-1zM645 740h1v1h-1zM664 740h1v1h-1zM683 740h1v1h-1zM702 740h1v1h-1zM721 740h1v1h-1zM740 740h1v1h-1zM759 740h1v1h-1zM778 740h1v1h-1zM796 740h1v1h-1zM815 740h1v1h-1zM834 740h1v1h-1zM853 740h1v1h-1zM3 759h1v1h-1zM22 759h1v1h-1zM41 759h1v1h-1zM59 759h1v1h-1zM78 759h1v1h-1zM97 759h1v1h-1zM116 759h1v1h-1zM135 759h1v1h-1zM154 759h1v1h-1zM173 759h1v1h-1zM192 759h1v1h-1zM211 759h1v1h-1zM230 759h1v1h-1zM248 759h1v1h-1zM267 759h1v1h-1zM286 759h1v1h-1zM305 759h1v1h-1zM324 759h1v1h-1zM343 759h1v1h-1zM362 759h1v1h-1zM381 759h1v1h-1zM400 759h1v1h-1zM419 759h1v1h-1zM437 759h1v1h-1zM456 759h1v1h-1zM475 759h1v1h-1zM494 759h1v1h-1zM513 759h1v1h-1zM532 759h1v1h-1zM551 759h1v1h-1zM570 759h1v1h-1zM589 759h1v1h-1zM607 759h1v1h-1zM626 759h1v1h-1zM645 759h1v1h-1zM664 759h1v1h-1zM683 759h1v1h-1zM702 759h1v1h-1zM721 759h1v1h-1zM740 759h1v1h-1zM759 759h1v1h-1zM778 759h1v1h-1zM796 759h1v1h-1zM815 759h1v1h-1zM834 759h1v1h-1zM853 759h1v1h-1zM3 778h1v1h-1zM22 778h1v1h-1zM41 778h1v1h-1zM59 778h1v1h-1zM78 778h1v1h-1zM97 778h1v1h-1zM116 778h1v1h-1zM135 778h1v1h-1zM154 778h1v1h-1zM173 778h1v1h-1zM192 778h1v1h-1zM211 778h1v1h-1zM230 778h1v1h-1zM248 778h1v1h-1zM267 778h1v1h-1zM286 778h1v1h-1zM305 778h1v1h-1zM324 778h1v1h-1zM343 778h1v1h-1zM362 778h1v1h-1zM381 778h1v1h-1zM400 778h1v1h-1zM419 778h1v1h-1zM437 778h1v1h-1zM456 778h1v1h-1zM475 778h1v1h-1zM494 778h1v1h-1zM513 778h1v1h-1zM532 778h1v1h-1zM551 778h1v1h-1zM570 778h1v1h-1zM589 778h1v1h-1zM607 778h1v1h-1zM626 778h1v1h-1zM645 778h1v1h-1zM664 778h1v1h-1zM683 778h1v1h-1zM702 778h1v1h-1zM721 778h1v1h-1zM740 778h1v1h-1zM759 778h1v1h-1zM778 778h1v1h-1zM796 778h1v1h-1zM815 778h1v1h-1zM834 778h1v1h-1zM853 778h1v1h-1zM3 797h1v1h-1zM22 797h1v1h-1zM41 797h1v1h-1zM59 797h1v1h-1zM78 797h1v1h-1zM97 797h1v1h-1zM116 797h1v1h-1zM135 797h1v1h-1zM154 797h1v1h-1zM173 797h1v1h-1zM192 797h1v1h-1zM211 797h1v1h-1zM230 797h1v1h-1zM248 797h1v1h-1zM267 797h1v1h-1zM286 797h1v1h-1zM305 797h1v1h-1zM324 797h1v1h-1zM343 797h1v1h-1zM362 797h1v1h-1zM381 797h1v1h-1zM400 797h1v1h-1zM419 797h1v1h-1zM437 797h1v1h-1zM456 797h1v1h-1zM475 797h1v1h-1zM494 797h1v1h-1zM513 797h1v1h-1zM532 797h1v1h-1zM551 797h1v1h-1zM570 797h1v1h-1zM589 797h1v1h-1zM607 797h1v1h-1zM626 797h1v1h-1zM645 797h1v1h-1zM664 797h1v1h-1zM683 797h1v1h-1zM702 797h1v1h-1zM721 797h1v1h-1zM740 797h1v1h-1zM759 797h1v1h-1zM778 797h1v1h-1zM796 797h1v1h-1zM815 797h1v1h-1zM834 797h1v1h-1zM853 797h1v1h-1zM3 816h1v1h-1zM22 816h1v1h-1zM41 816h1v1h-1zM59 816h1v1h-1zM78 816h1v1h-1zM97 816h1v1h-1zM116 816h1v1h-1zM135 816h1v1h-1zM154 816h1v1h-1zM173 816h1v1h-1zM192 816h1v1h-1zM211 816h1v1h-1zM230 816h1v1h-1zM248 816h1v1h-1zM267 816h1v1h-1zM286 816h1v1h-1zM305 816h1v1h-1zM324 816h1v1h-1zM343 816h1v1h-1zM362 816h1v1h-1zM381 816h1v1h-1zM400 816h1v1h-1zM419 816h1v1h-1zM437 816h1v1h-1zM456 816h1v1h-1zM475 816h1v1h-1zM494 816h1v1h-1zM513 816h1v1h-1zM532 816h1v1h-1zM551 816h1v1h-1zM570 816h1v1h-1zM589 816h1v1h-1zM607 816h1v1h-1zM626 816h1v1h-1zM645 816h1v1h-1zM664 816h1v1h-1zM683 816h1v1h-1zM702 816h1v1h-1zM721 816h1v1h-1zM740 816h1v1h-1zM759 816h1v1h-1zM778 816h1v1h-1zM796 816h1v1h-1zM815 816h1v1h-1zM834 816h1v1h-1zM853 816h1v1h-1zM3 835h1v1h-1zM22 835h1v1h-1zM41 835h1v1h-1zM59 835h1v1h-1zM78 835h1v1h-1zM97 835h1v1h-1zM116 835h1v1h-1zM135 835h1v1h-1zM154 835h1v1h-1zM173 835h1v1h-1zM192 835h1v1h-1zM211 835h1v1h-1zM230 835h1v1h-1zM248 835h1v1h-1zM267 835h1v1h-1zM286 835h1v1h-1zM305 835h1v1h-1zM324 835h1v1h-1zM343 835h1v1h-1zM362 835h1v1h-1zM381 835h1v1h-1zM400 835h1v1h-1zM419 835h1v1h-1zM437 835h1v1h-1zM456 835h1v1h-1zM475 835h1v1h-1zM494 835h1v1h-1zM513 835h1v1h-1zM532 835h1v1h-1zM551 835h1v1h-1zM570 835h1v1h-1zM589 835h1v1h-1zM607 835h1v1h-1zM626 835h1v1h-1zM645 835h1v1h-1zM664 835h1v1h-1zM683 835h1v1h-1zM702 835h1v1h-1zM721 835h1v1h-1zM740 835h1v1h-1zM759 835h1v1h-1zM778 835h1v1h-1zM796 835h1v1h-1zM815 835h1v1h-1zM834 835h1v1h-1zM853 835h1v1h-1zM3 854h1v1h-1zM22 854h1v1h-1zM41 854h1v1h-1zM59 854h1v1h-1zM78 854h1v1h-1zM97 854h1v1h-1zM116 854h1v1h-1zM135 854h1v1h-1zM154 854h1v1h-1zM173 854h1v1h-1zM192 854h1v1h-1zM211 854h1v1h-1zM230 854h1v1h-1zM248 854h1v1h-1zM267 854h1v1h-1zM286 854h1v1h-1zM305 854h1v1h-1zM324 854h1v1h-1zM343 854h1v1h-1zM362 854h1v1h-1zM381 854h1v1h-1zM400 854h1v1h-1zM419 854h1v1h-1zM437 854h1v1h-1zM456 854h1v1h-1zM475 854h1v1h-1zM494 854h1v1h-1zM513 854h1v1h-1zM532 854h1v1h-1zM551 854h1v1h-1zM570 854h1v1h-1zM589 854h1v1h-1zM607 854h1v1h-1zM626 854h1v1h-1zM645 854h1v1h-1zM664 854h1v1h-1zM683 854h1v1h-1zM702 854h1v1h-1zM721 854h1v1h-1zM740 854h1v1h-1zM759 854h1v1h-1zM778 854h1v1h-1zM796 854h1v1h-1zM815 854h1v1h-1zM834 854h1v1h-1zM853 854h1v1h-1zM3 873h1v1h-1zM22 873h1v1h-1zM41 873h1v1h-1zM59 873h1v1h-1zM78 873h1v1h-1zM97 873h1v1h-1zM116 873h1v1h-1zM135 873h1v1h-1zM154 873h1v1h-1zM173 873h1v1h-1zM192 873h1v1h-1zM211 873h1v1h-1zM230 873h1v1h-1zM248 873h1v1h-1zM267 873h1v1h-1zM286 873h1v1h-1zM305 873h1v1h-1zM324 873h1v1h-1zM343 873h1v1h-1zM362 873h1v1h-1zM381 873h1v1h-1zM400 873h1v1h-1zM419 873h1v1h-1zM437 873h1v1h-1zM456 873h1v1h-1zM475 873h1v1h-1zM494 873h1v1h-1zM513 873h1v1h-1zM532 873h1v1h-1zM551 873h1v1h-1zM570 873h1v1h-1zM589 873h1v1h-1zM607 873h1v1h-1zM626 873h1v1h-1zM645 873h1v1h-1zM664 873h1v1h-1zM683 873h1v1h-1zM702 873h1v1h-1zM721 873h1v1h-1zM740 873h1v1h-1zM759 873h1v1h-1zM778 873h1v1h-1zM796 873h1v1h-1zM815 873h1v1h-1zM834 873h1v1h-1zM853 873h1v1h-1zM3 891h1v1h-1zM22 891h1v1h-1zM41 891h1v1h-1zM59 891h1v1h-1zM78 891h1v1h-1zM97 891h1v1h-1zM116 891h1v1h-1zM135 891h1v1h-1zM154 891h1v1h-1zM173 891h1v1h-1zM192 891h1v1h-1zM211 891h1v1h-1zM230 891h1v1h-1zM248 891h1v1h-1zM267 891h1v1h-1zM286 891h1v1h-1zM305 891h1v1h-1zM324 891h1v1h-1zM343 891h1v1h-1zM362 891h1v1h-1zM381 891h1v1h-1zM400 891h1v1h-1zM419 891h1v1h-1zM437 891h1v1h-1zM456 891h1v1h-1zM475 891h1v1h-1zM494 891h1v1h-1zM513 891h1v1h-1zM532 891h1v1h-1zM551 891h1v1h-1zM570 891h1v1h-1zM589 891h1v1h-1zM607 891h1v1h-1zM626 891h1v1h-1zM645 891h1v1h-1zM664 891h1v1h-1zM683 891h1v1h-1zM702 891h1v1h-1zM721 891h1v1h-1zM740 891h1v1h-1zM759 891h1v1h-1zM778 891h1v1h-1zM796 891h1v1h-1zM815 891h1v1h-1zM834 891h1v1h-1zM853 891h1v1h-1z" fill="#000"/><path d="M494 513h1v1h-1zM579 513h1v1h-1zM494 514h1v1h-1zM579 514h1v1h-1zM494 515h1v1h-1zM579 515h1v1h-1zM494 516h1v1h-1zM579 516h1v1h-1zM494 517h1v1h-1zM579 517h1v1h-1zM494 518h1v1h-1zM579 518h1v1h-1zM495 519h2v1h-2zM580 519h2v1h-2zM497 520h2v1h-2zM582 520h2v1h-2zM499 521h2v1h-2zM584 521h2v1h-2zM501 522h2v1h-2zM586 522h2v1h-2zM503 523h2v1h-2zM588 523h2v1h-2zM501 524h2v1h-2zM586 524h2v1h-2zM499 525h2v1h-2zM584 525h2v1h-2zM497 526h2v1h-2zM582 526h2v1h-2zM495 527h2v1h-2zM580 527h2v1h-2zM493 528h2v1h-2zM578 528h2v1h-2zM491 529h2v1h-2zM576 529h2v1h-2zM489 530h2v1h-2zM574 530h2v1h-2zM487 531h2v1h-2zM572 531h2v1h-2zM485 532h2v1h-2zM570 532h2v1h-2zM486 533h2v1h-2zM571 533h2v1h-2zM488 534h2v1h-2zM573 534h2v1h-2zM490 535h2v1h-2zM575 535h2v1h-2zM492 536h2v1h-2zM577 536h2v1h-2zM494 537h2v1h-2zM579 537h2v1h-2zM496 538h2v1h-2zM581 538h2v1h-2zM498 539h2v1h-2zM583 539h2v1h-2zM500 540h2v1h-2zM585 540h2v1h-2zM502 541h2v1h-2zM587 541h2v1h-2zM503 542h2v1h-2zM588 542h2v1h-2zM501 543h2v1h-2zM586 543h2v1h-2zM499 544h2v1h-2zM584 544h2v1h-2zM497 545h2v1h-2zM582 545h2v1h-2zM495 546h2v1h-2zM580 546h2v1h-2zM493 547h2v1h-2zM578 547h2v1h-2zM491 548h2v1h-2zM576 548h2v1h-2zM489 549h2v1h-2zM574 549h2v1h-2zM487 550h2v1h-2zM572 550h2v1h-2zM485 551h2v1h-2zM570 551h2v1h-2zM486 552h2v1h-2zM571 552h2v1h-2zM488 553h2v1h-2zM573 553h2v1h-2zM490 554h2v1h-2zM575 554h2v1h-2zM492 555h2v1h-2zM577 555h2v1h-2zM494 556h1v1h-1zM579 556h1v1h-1zM494 557h1v1h-1zM579 557h1v1h-1zM494 558h1v1h-1zM579 558h1v1h-1zM494 559h1v1h-1zM579 559h1v1h-1zM494 560h1v1h-1zM579 560h1v1h-1zM494 561h1v1h-1zM579 561h1v1h-1zM643 570h1v1h-1zM648 570h1v1h-1zM643 571h1v1h-1zM648 571h1v1h-1zM643 572h1v1h-1zM648 572h1v1h-1zM643 573h1v1h-1zM648 573h1v1h-1zM643 574h1v1h-1zM648 574h1v1h-1zM643 575h1v1h-1zM648 575h1v1h-1zM643 576h1v1h-1zM648 576h1v1h-1zM643 577h1v1h-1zM648 577h1v1h-1zM643 578h1v1h-1zM648 578h1v1h-1zM643 579h1v1h-1zM648 579h1v1h-1zM626 580h18v1h-18zM648 580h17v1h-17zM643 581h1v1h-1zM648 581h1v1h-1zM643 582h1v1h-1zM648 582h1v1h-1zM643 583h1v1h-1zM648 583h1v1h-1zM643 584h1v1h-1zM648 584h1v1h-1zM643 585h1v1h-1zM648 585h1v1h-1zM643 586h1v1h-1zM648 586h1v1h-1zM643 587h1v1h-1zM648 587h1v1h-1zM643 588h1v1h-1zM648 588h1v1h-1zM409 589h1v1h-1zM494 589h1v1h-1zM643 589h1v1h-1zM648 589h1v1h-1zM409 590h1v1h-1zM495 590h2v1h-2zM409 591h1v1h-1zM497 591h1v1h-1zM409 592h1v1h-1zM498 592h2v1h-2zM409 593h1v1h-1zM500 593h1v1h-1zM409 594h2v1h-2zM501 594h2v1h-2zM411 595h2v1h-2zM503 595h1v1h-1zM413 596h3v1h-3zM504 596h2v1h-2zM416 597h2v1h-2zM506 597h1v1h-1zM418 598h2v1h-2zM507 598h2v1h-2zM523 598h1v1h-1zM417 599h2v1h-2zM509 599h2v1h-2zM523 599h1v1h-1zM415 600h2v1h-2zM511 600h1v1h-1zM523 600h1v1h-1zM413 601h2v1h-2zM512 601h2v1h-2zM523 601h1v1h-1zM411 602h2v1h-2zM514 602h1v1h-1zM523 602h1v1h-1zM409 603h2v1h-2zM515 603h2v1h-2zM523 603h1v1h-1zM407 604h2v1h-2zM517 604h1v1h-1zM523 604h1v1h-1zM405 605h2v1h-2zM518 605h2v1h-2zM523 605h1v1h-1zM403 606h2v1h-2zM520 606h1v1h-1zM523 606h1v1h-1zM401 607h2v1h-2zM521 607h3v1h-3zM400 608h2v1h-2zM523 608h1v1h-1zM402 609h2v1h-2zM523 609h1v1h-1zM404 610h2v1h-2zM523 610h1v1h-1zM406 611h2v1h-2zM523 611h1v1h-1zM408 612h2v1h-2zM523 612h1v1h-1zM410 613h2v1h-2zM523 613h1v1h-1zM412 614h2v1h-2zM523 614h1v1h-1zM414 615h2v1h-2zM523 615h1v1h-1zM416 616h2v1h-2zM523 616h1v1h-1zM418 617h2v1h-2zM523 617h10v1h-10zM551 617h1v1h-1zM417 618h2v1h-2zM523 618h1v1h-1zM551 618h1v1h-1zM415 619h2v1h-2zM523 619h1v1h-1zM551 619h1v1h-1zM413 620h2v1h-2zM523 620h1v1h-1zM551 620h1v1h-1zM411 621h2v1h-2zM523 621h1v1h-1zM551 621h1v1h-1zM409 622h2v1h-2zM523 622h1v1h-1zM551 622h1v1h-1zM407 623h2v1h-2zM523 623h1v1h-1zM551 623h1v1h-1zM405 624h2v1h-2zM523 624h1v1h-1zM551 624h1v1h-1zM403 625h2v1h-2zM523 625h1v1h-1zM551 625h1v1h-1zM401 626h2v1h-2zM523 626h1v1h-1zM551 626h1v1h-1zM400 627h1v1h-1zM523 627h1v1h-1zM551 627h1v1h-1zM401 628h2v1h-2zM521 628h3v1h-3zM551 628h1v1h-1zM403 629h2v1h-2zM519 629h2v1h-2zM523 629h1v1h-1zM551 629h1v1h-1zM405 630h2v1h-2zM518 630h1v1h-1zM523 630h1v1h-1zM551 630h1v1h-1zM407 631h2v1h-2zM516 631h2v1h-2zM523 631h1v1h-1zM551 631h1v1h-1zM409 632h1v1h-1zM514 632h2v1h-2zM523 632h1v1h-1zM551 632h1v1h-1zM409 633h1v1h-1zM513 633h1v1h-1zM523 633h1v1h-1zM551 633h1v1h-1zM409 634h1v1h-1zM506 634h1v1h-1zM511 634h2v1h-2zM523 634h1v1h-1zM541 634h20v1h-20zM409 635h1v1h-1zM505 635h1v1h-1zM507 635h1v1h-1zM509 635h2v1h-2zM523 635h1v1h-1zM409 636h1v1h-1zM504 636h1v1h-1zM508 636h1v1h-1zM523 636h1v1h-1zM503 637h1v1h-1zM509 637h1v1h-1zM502 638h1v1h-1zM510 638h1v1h-1zM501 639h1v1h-1zM510 639h2v1h-2zM541 639h20v1h-20zM500 640h1v1h-1zM508 640h2v1h-2zM551 640h1v1h-1zM499 641h1v1h-1zM505 641h3v1h-3zM551 641h1v1h-1zM498 642h1v1h-1zM503 642h2v1h-2zM551 642h1v1h-1zM497 643h1v1h-1zM501 643h2v1h-2zM551 643h1v1h-1zM496 644h1v1h-1zM498 644h3v1h-3zM551 644h1v1h-1zM495 645h3v1h-3zM551 645h1v1h-1zM494 646h2v1h-2zM551 646h1v1h-1zM551 647h1v1h-1zM551 648h1v1h-1zM551 649h1v1h-1zM551 650h1v1h-1zM551 651h1v1h-1zM551 652h1v1h-1zM551 653h1v1h-1zM551 654h1v1h-1zM267 655h1v1h-1zM551 655h1v1h-1zM267 656h1v1h-1zM267 657h1v1h-1zM267 658h1v1h-1zM267 659h1v1h-1zM267 660h1v1h-1zM267 662h1v1h-1zM267 663h1v1h-1zM267 664h1v1h-1zM267 665h1v1h-1zM494 665h1v1h-1zM267 666h1v1h-1zM492 666h2v1h-2zM263 667h10v1h-10zM491 667h1v1h-1zM267 668h1v1h-1zM489 668h2v1h-2zM267 669h1v1h-1zM487 669h2v1h-2zM267 670h1v1h-1zM486 670h1v1h-1zM267 671h1v1h-1zM484 671h2v1h-2zM267 672h1v1h-1zM483 672h1v1h-1zM481 673h2v1h-2zM466 674h1v1h-1zM480 674h1v1h-1zM466 675h1v1h-1zM478 675h2v1h-2zM466 676h1v1h-1zM477 676h1v1h-1zM466 677h1v1h-1zM475 677h2v1h-2zM466 678h1v1h-1zM473 678h2v1h-2zM466 679h1v1h-1zM472 679h1v1h-1zM466 680h1v1h-1zM470 680h2v1h-2zM466 681h1v1h-1zM469 681h1v1h-1zM466 682h3v1h-3zM378 683h1v1h-1zM383 683h1v1h-1zM466 683h1v1h-1zM378 684h1v1h-1zM383 684h1v1h-1zM466 684h1v1h-1zM378 685h1v1h-1zM383 685h1v1h-1zM466 685h1v1h-1zM378 686h1v1h-1zM383 686h1v1h-1zM466 686h1v1h-1zM378 687h1v1h-1zM383 687h1v1h-1zM466 687h1v1h-1zM378 688h1v1h-1zM383 688h1v1h-1zM466 688h1v1h-1zM378 689h1v1h-1zM383 689h1v1h-1zM466 689h1v1h-1zM378 690h1v1h-1zM383 690h1v1h-1zM466 690h1v1h-1zM263 691h10v1h-10zM378 691h1v1h-1zM383 691h1v1h-1zM466 691h1v1h-1zM378 692h1v1h-1zM383 692h1v1h-1zM466 692h1v1h-1zM362 693h17v1h-17zM383 693h18v1h-18zM456 693h11v1h-11zM378 694h1v1h-1zM383 694h1v1h-1zM466 694h1v1h-1zM378 695h1v1h-1zM383 695h1v1h-1zM466 695h1v1h-1zM378 696h1v1h-1zM383 696h1v1h-1zM466 696h1v1h-1zM378 697h1v1h-1zM383 697h1v1h-1zM466 697h1v1h-1zM267 698h1v1h-1zM378 698h1v1h-1zM383 698h1v1h-1zM466 698h1v1h-1zM267 699h1v1h-1zM378 699h1v1h-1zM383 699h1v1h-1zM466 699h1v1h-1zM267 700h1v1h-1zM378 700h1v1h-1zM383 700h1v1h-1zM466 700h1v1h-1zM267 701h1v1h-1zM378 701h1v1h-1zM383 701h1v1h-1zM466 701h1v1h-1zM267 702h1v1h-1zM378 702h1v1h-1zM383 702h1v1h-1zM466 702h1v1h-1zM466 703h3v1h-3zM466 704h1v1h-1zM469 704h1v1h-1zM466 705h1v1h-1zM470 705h1v1h-1zM466 706h1v1h-1zM471 706h2v1h-2zM466 707h1v1h-1zM473 707h1v1h-1zM466 708h1v1h-1zM474 708h2v1h-2zM466 709h1v1h-1zM476 709h1v1h-1zM482 709h1v1h-1zM466 710h1v1h-1zM477 710h1v1h-1zM481 710h1v1h-1zM483 710h1v1h-1zM466 711h1v1h-1zM478 711h3v1h-3zM484 711h1v1h-1zM343 712h1v1h-1zM466 712h1v1h-1zM480 712h1v1h-1zM485 712h1v1h-1zM343 713h1v1h-1zM479 713h1v1h-1zM486 713h1v1h-1zM343 714h1v1h-1zM478 714h2v1h-2zM487 714h1v1h-1zM343 715h1v1h-1zM480 715h2v1h-2zM488 715h1v1h-1zM343 716h1v1h-1zM482 716h2v1h-2zM489 716h1v1h-1zM343 717h1v1h-1zM484 717h2v1h-2zM490 717h1v1h-1zM486 718h3v1h-3zM491 718h1v1h-1zM343 719h1v1h-1zM489 719h2v1h-2zM492 719h1v1h-1zM343 720h1v1h-1zM491 720h3v1h-3zM343 721h1v1h-1zM409 721h1v1h-1zM493 721h2v1h-2zM343 722h1v1h-1zM409 722h1v1h-1zM343 723h1v1h-1zM409 723h1v1h-1zM338 724h11v1h-11zM409 724h1v1h-1zM343 725h1v1h-1zM409 725h1v1h-1zM343 726h1v1h-1zM409 726h1v1h-1zM343 727h1v1h-1zM410 727h2v1h-2zM343 728h1v1h-1zM412 728h2v1h-2zM414 729h2v1h-2zM416 730h2v1h-2zM418 731h2v1h-2zM416 732h2v1h-2zM414 733h2v1h-2zM412 734h2v1h-2zM410 735h2v1h-2zM408 736h2v1h-2zM406 737h2v1h-2zM404 738h2v1h-2zM402 739h2v1h-2zM400 740h2v1h-2zM494 740h1v1h-1zM579 740h1v1h-1zM401 741h2v1h-2zM494 741h1v1h-1zM579 741h1v1h-1zM403 742h2v1h-2zM494 742h1v1h-1zM579 742h1v1h-1zM405 743h2v1h-2zM494 743h1v1h-1zM579 743h1v1h-1zM407 744h2v1h-2zM494 744h1v1h-1zM579 744h1v1h-1zM409 745h2v1h-2zM494 745h1v1h-1zM579 745h1v1h-1zM411 746h2v1h-2zM495 746h2v1h-2zM580 746h2v1h-2zM338 747h11v1h-11zM413 747h2v1h-2zM497 747h2v1h-2zM582 747h2v1h-2zM415 748h2v1h-2zM499 748h2v1h-2zM584 748h2v1h-2zM417 749h2v1h-2zM501 749h2v1h-2zM586 749h2v1h-2zM418 750h2v1h-2zM503 750h2v1h-2zM588 750h2v1h-2zM416 751h2v1h-2zM501 751h2v1h-2zM586 751h2v1h-2zM414 752h2v1h-2zM499 752h2v1h-2zM584 752h2v1h-2zM412 753h2v1h-2zM497 753h2v1h-2zM582 753h2v1h-2zM343 754h1v1h-1zM410 754h2v1h-2zM495 754h2v1h-2zM580 754h2v1h-2zM343 755h1v1h-1zM408 755h2v1h-2zM493 755h2v1h-2zM578 755h2v1h-2zM343 756h1v1h-1zM406 756h2v1h-2zM491 756h2v1h-2zM576 756h2v1h-2zM343 757h1v1h-1zM404 757h2v1h-2zM489 757h2v1h-2zM574 757h2v1h-2zM343 758h1v1h-1zM402 758h2v1h-2zM487 758h2v1h-2zM572 758h2v1h-2zM343 759h1v1h-1zM400 759h2v1h-2zM485 759h2v1h-2zM570 759h2v1h-2zM401 760h2v1h-2zM486 760h2v1h-2zM571 760h2v1h-2zM403 761h2v1h-2zM488 761h2v1h-2zM573 761h2v1h-2zM405 762h2v1h-2zM490 762h2v1h-2zM575 762h2v1h-2zM407 763h2v1h-2zM492 763h2v1h-2zM577 763h2v1h-2zM409 764h1v1h-1zM494 764h2v1h-2zM579 764h2v1h-2zM409 765h1v1h-1zM496 765h2v1h-2zM581 765h2v1h-2zM409 766h1v1h-1zM498 766h2v1h-2zM583 766h2v1h-2zM409 767h1v1h-1zM500 767h2v1h-2zM585 767h2v1h-2zM409 768h1v1h-1zM502 768h2v1h-2zM587 768h2v1h-2zM409 769h1v1h-1zM503 769h2v1h-2zM588 769h2v1h-2zM501 770h2v1h-2zM586 770h2v1h-2zM499 771h2v1h-2zM584 771h2v1h-2zM497 772h2v1h-2zM582 772h2v1h-2zM495 773h2v1h-2zM580 773h2v1h-2zM493 774h2v1h-2zM578 774h2v1h-2zM491 775h2v1h-2zM576 775h2v1h-2zM489 776h2v1h-2zM574 776h2v1h-2zM487 777h2v1h-2zM572 777h2v1h-2zM485 778h2v1h-2zM570 778h2v1h-2zM486 779h2v1h-2zM571 779h2v1h-2zM488 780h2v1h-2zM573 780h2v1h-2zM490 781h2v1h-2zM575 781h2v1h-2zM492 782h2v1h-2zM577 782h2v1h-2zM494 783h1v1h-1zM579 783h1v1h-1zM494 784h1v1h-1zM579 784h1v1h-1zM494 785h1v1h-1zM579 785h1v1h-1zM494 786h1v1h-1zM579 786h1v1h-1zM494 787h1v1h-1zM579 787h1v1h-1zM494 806h1v1h-1zM494 807h1v1h-1zM494 808h1v1h-1zM494 809h1v1h-1zM494 810h1v1h-1zM494 811h1v1h-1zM495 812h2v1h-2zM497 813h2v1h-2zM499 814h2v1h-2zM501 815h2v1h-2zM503 816h2v1h-2zM532 816h1v1h-1zM501 817h2v1h-2zM532 817h1v1h-1zM499 818h2v1h-2zM532 818h1v1h-1zM497 819h2v1h-2zM532 819h1v1h-1zM495 820h2v1h-2zM532 820h1v1h-1zM493 821h2v1h-2zM532 821h1v1h-1zM491 822h2v1h-2zM532 822h1v1h-1zM489 823h2v1h-2zM532 823h1v1h-1zM487 824h2v1h-2zM532 824h1v1h-1zM485 825h2v1h-2zM532 825h1v1h-1zM486 826h2v1h-2zM532 826h1v1h-1zM488 827h2v1h-2zM532 827h1v1h-1zM490 828h2v1h-2zM532 828h1v1h-1zM492 829h2v1h-2zM532 829h1v1h-1zM494 830h2v1h-2zM532 830h1v1h-1zM496 831h2v1h-2zM532 831h1v1h-1zM498 832h2v1h-2zM522 832h20v1h-20zM500 833h2v1h-2zM502 834h2v1h-2zM503 835h2v1h-2zM501 836h2v1h-2zM499 837h2v1h-2zM522 837h20v1h-20zM497 838h2v1h-2zM532 838h1v1h-1zM495 839h2v1h-2zM532 839h1v1h-1zM493 840h2v1h-2zM532 840h1v1h-1zM491 841h2v1h-2zM532 841h1v1h-1zM489 842h2v1h-2zM532 842h1v1h-1zM487 843h2v1h-2zM532 843h1v1h-1zM485 844h2v1h-2zM532 844h1v1h-1zM486 845h2v1h-2zM532 845h1v1h-1zM488 846h2v1h-2zM532 846h1v1h-1zM490 847h2v1h-2zM532 847h1v1h-1zM492 848h2v1h-2zM532 848h1v1h-1zM494 849h1v1h-1zM532 849h1v1h-1zM494 850h1v1h-1zM532 850h1v1h-1zM494 851h1v1h-1zM532 851h1v1h-1zM494 852h1v1h-1zM532 852h1v1h-1zM494 853h1v1h-1zM532 853h1v1h-1zM494 854h1v1h-1zM532 854h1v1h-1z" fill="#000080"/><ellipse cx="267.0" cy="679.0" rx="18.5" ry="18.5" stroke="#000080" fill="none" shape-rendering="crispEdges"/><ellipse cx="343.0" cy="735.5" rx="18.5" ry="18.0" stroke="#000080" fill="none" shape-rendering="crispEdges"/><path d="M267 494h313v1h-313zM267 495h1v1h-1zM409 495h1v1h-1zM494 495h1v1h-1zM579 495h1v1h-1zM267 496h1v1h-1zM409 496h1v1h-1zM494 496h1v1h-1zM579 496h1v1h-1zM267 497h1v1h-1zM409 497h1v1h-1zM494 497h1v1h-1zM579 497h1v1h-1zM267 498h1v1h-1zM409 498h1v1h-1zM494 498h1v1h-1zM579 498h1v1h-1zM267 499h1v1h-1zM409 499h1v1h-1zM494 499h1v1h-1zM579 499h1v1h-1zM267 500h1v1h-1zM409 500h1v1h-1zM494 500h1v1h-1zM579 500h1v1h-1zM267 501h1v1h-1zM409 501h1v1h-1zM494 501h1v1h-1zM579 501h1v1h-1zM267 502h1v1h-1zM409 502h1v1h-1zM494 502h1v1h-1zM579 502h1v1h-1zM267 503h1v1h-1zM409 503h1v1h-1zM494 503h1v1h-1zM579 503h1v1h-1zM267 504h1v1h-1zM409 504h1v1h-1zM494 504h1v1h-1zM579 504h1v1h-1zM267 505h1v1h-1zM409 505h1v1h-1zM494 505h1v1h-1zM579 505h1v1h-1zM267 506h1v1h-1zM409 506h1v1h-1zM494 506h1v1h-1zM579 506h1v1h-1zM267 507h1v1h-1zM409 507h1v1h-1zM494 507h1v1h-1zM579 507h1v1h-1zM267 508h1v1h-1zM409 508h1v1h-1zM494 508h1v1h-1zM579 508h1v1h-1zM267 509h1v1h-1zM409 509h1v1h-1zM494 509h1v1h-1zM579 509h1v1h-1zM267 510h1v1h-1zM409 510h1v1h-1zM494 510h1v1h-1zM579 510h1v1h-1zM267 511h1v1h-1zM409 511h1v1h-1zM494 511h1v1h-1zM579 511h1v1h-1zM267 512h1v1h-1zM409 512h1v1h-1zM494 512h1v1h-1zM579 512h1v1h-1zM267 513h1v1h-1zM409 513h1v1h-1zM494 513h1v1h-1zM579 513h1v1h-1zM267 514h1v1h-1zM409 514h1v1h-1zM267 515h1v1h-1zM409 515h1v1h-1zM267 516h1v1h-1zM409 516h1v1h-1zM267 517h1v1h-1zM409 517h1v1h-1zM267 518h1v1h-1zM409 518h1v1h-1zM267 519h1v1h-1zM409 519h1v1h-1zM267 520h1v1h-1zM409 520h1v1h-1zM267 521h1v1h-1zM409 521h1v1h-1zM267 522h1v1h-1zM409 522h1v1h-1zM267 523h1v1h-1zM409 523h1v1h-1zM267 524h1v1h-1zM409 524h1v1h-1zM267 525h1v1h-1zM409 525h1v1h-1zM267 526h1v1h-1zM409 526h1v1h-1zM267 527h1v1h-1zM409 527h1v1h-1zM267 528h1v1h-1zM409 528h1v1h-1zM267 529h1v1h-1zM409 529h1v1h-1zM267 530h1v1h-1zM409 530h1v1h-1zM267 531h1v1h-1zM409 531h1v1h-1zM267 532h1v1h-1zM409 532h1v1h-1zM267 533h1v1h-1zM409 533h1v1h-1zM267 534h1v1h-1zM409 534h1v1h-1zM267 535h1v1h-1zM409 535h1v1h-1zM267 536h1v1h-1zM409 536h1v1h-1zM267 537h1v1h-1zM409 537h1v1h-1zM267 538h1v1h-1zM409 538h1v1h-1zM267 539h1v1h-1zM409 539h1v1h-1zM267 540h1v1h-1zM409 540h1v1h-1zM267 541h1v1h-1zM409 541h1v1h-1zM267 542h1v1h-1zM409 542h1v1h-1zM267 543h1v1h-1zM409 543h1v1h-1zM267 544h1v1h-1zM409 544h1v1h-1zM267 545h1v1h-1zM409 545h1v1h-1zM267 546h1v1h-1zM409 546h1v1h-1zM267 547h1v1h-1zM409 547h1v1h-1zM267 548h1v1h-1zM409 548h1v1h-1zM267 549h1v1h-1zM409 549h1v1h-1zM267 550h1v1h-1zM409 550h1v1h-1zM267 551h1v1h-1zM409 551h1v1h-1zM267 552h1v1h-1zM409 552h1v1h-1zM267 553h1v1h-1zM409 553h1v1h-1zM267 554h1v1h-1zM409 554h1v1h-1zM267 555h1v1h-1zM409 555h1v1h-1zM267 556h1v1h-1zM409 556h1v1h-1zM267 557h1v1h-1zM409 557h1v1h-1zM267 558h1v1h-1zM409 558h1v1h-1zM267 559h1v1h-1zM409 559h1v1h-1zM267 560h1v1h-1zM409 560h1v1h-1zM267 561h1v1h-1zM409 561h1v1h-1zM494 561h1v1h-1zM579 561h1v1h-1zM267 562h1v1h-1zM409 562h1v1h-1zM494 562h1v1h-1zM579 562h1v1h-1zM267 563h1v1h-1zM409 563h1v1h-1zM494 563h1v1h-1zM579 563h1v1h-1zM267 564h1v1h-1zM409 564h1v1h-1zM494 564h1v1h-1zM579 564h1v1h-1zM267 565h1v1h-1zM409 565h1v1h-1zM494 565h1v1h-1zM579 565h1v1h-1zM267 566h1v1h-1zM409 566h1v1h-1zM494 566h1v1h-1zM579 566h1v1h-1zM267 567h1v1h-1zM409 567h1v1h-1zM494 567h1v1h-1zM579 567h1v1h-1zM267 568h1v1h-1zM409 568h1v1h-1zM494 568h1v1h-1zM579 568h1v1h-1zM267 569h1v1h-1zM409 569h1v1h-1zM494 569h1v1h-1zM579 569h1v1h-1zM267 570h1v1h-1zM409 570h1v1h-1zM494 570h1v1h-1zM579 570h1v1h-1zM267 571h1v1h-1zM409 571h1v1h-1zM494 571h1v1h-1zM579 571h1v1h-1zM267 572h1v1h-1zM409 572h1v1h-1zM494 572h1v1h-1zM579 572h1v1h-1zM267 573h1v1h-1zM409 573h1v1h-1zM494 573h1v1h-1zM579 573h1v1h-1zM267 574h1v1h-1zM409 574h1v1h-1zM494 574h1v1h-1zM579 574h1v1h-1zM267 575h1v1h-1zM409 575h1v1h-1zM494 575h1v1h-1zM579 575h1v1h-1zM267 576h1v1h-1zM409 576h1v1h-1zM494 576h1v1h-1zM579 576h1v1h-1zM267 577h1v1h-1zM409 577h1v1h-1zM494 577h1v1h-1zM579 577h1v1h-1zM267 578h1v1h-1zM409 578h1v1h-1zM494 578h1v1h-1zM579 578h1v1h-1zM267 579h1v1h-1zM409 579h1v1h-1zM494 579h1v1h-1zM579 579h1v1h-1zM267 580h1v1h-1zM409 580h1v1h-1zM494 580h133v1h-133zM664 580h20v1h-20zM267 581h1v1h-1zM409 581h1v1h-1zM494 581h1v1h-1zM579 581h1v1h-1zM267 582h1v1h-1zM409 582h1v1h-1zM494 582h1v1h-1zM579 582h1v1h-1zM267 583h1v1h-1zM409 583h1v1h-1zM494 583h1v1h-1zM579 583h1v1h-1zM267 584h1v1h-1zM409 584h1v1h-1zM494 584h1v1h-1zM579 584h1v1h-1zM267 585h1v1h-1zM409 585h1v1h-1zM494 585h1v1h-1zM579 585h1v1h-1zM267 586h1v1h-1zM409 586h1v1h-1zM494 586h1v1h-1zM579 586h1v1h-1zM267 587h1v1h-1zM409 587h1v1h-1zM494 587h1v1h-1zM579 587h1v1h-1zM267 588h1v1h-1zM409 588h1v1h-1zM494 588h1v1h-1zM579 588h1v1h-1zM267 589h1v1h-1zM409 589h1v1h-1zM494 589h1v1h-1zM579 589h1v1h-1zM267 590h1v1h-1zM579 590h1v1h-1zM267 591h1v1h-1zM579 591h1v1h-1zM267 592h1v1h-1zM579 592h1v1h-1zM267 593h1v1h-1zM579 593h1v1h-1zM267 594h1v1h-1zM579 594h1v1h-1zM267 595h1v1h-1zM579 595h1v1h-1zM267 596h1v1h-1zM579 596h1v1h-1zM267 597h1v1h-1zM579 597h1v1h-1zM267 598h1v1h-1zM579 598h1v1h-1zM267 599h1v1h-1zM579 599h1v1h-1zM267 600h1v1h-1zM579 600h1v1h-1zM267 601h1v1h-1zM579 601h1v1h-1zM267 602h1v1h-1zM579 602h1v1h-1zM267 603h1v1h-1zM579 603h1v1h-1zM267 604h1v1h-1zM579 604h1v1h-1zM267 605h1v1h-1zM579 605h1v1h-1zM267 606h1v1h-1zM579 606h1v1h-1zM267 607h1v1h-1zM579 607h1v1h-1zM267 608h1v1h-1zM579 608h1v1h-1zM267 609h1v1h-1zM579 609h1v1h-1zM267 610h1v1h-1zM579 610h1v1h-1zM267 611h1v1h-1zM579 611h1v1h-1zM267 612h1v1h-1zM579 612h1v1h-1zM267 613h1v1h-1zM579 613h1v1h-1zM267 614h1v1h-1zM579 614h1v1h-1zM267 615h1v1h-1zM579 615h1v1h-1zM267 616h1v1h-1zM579 616h1v1h-1zM267 617h1v1h-1zM532 617h48v1h-48zM267 618h1v1h-1zM579 618h1v1h-1zM267 619h1v1h-1zM579 619h1v1h-1zM267 620h1v1h-1zM579 620h1v1h-1zM267 621h1v1h-1zM579 621h1v1h-1zM267 622h1v1h-1zM579 622h1v1h-1zM267 623h1v1h-1zM579 623h1v1h-1zM267 624h1v1h-1zM579 624h1v1h-1zM267 625h1v1h-1zM579 625h1v1h-1zM267 626h1v1h-1zM579 626h1v1h-1zM267 627h1v1h-1zM579 627h1v1h-1zM267 628h1v1h-1zM579 628h1v1h-1zM267 629h1v1h-1zM579 629h1v1h-1zM267 630h1v1h-1zM579 630h1v1h-1zM267 631h1v1h-1zM579 631h1v1h-1zM267 632h1v1h-1zM579 632h1v1h-1zM267 633h1v1h-1zM579 633h1v1h-1zM267 634h1v1h-1zM579 634h1v1h-1zM267 635h1v1h-1zM579 635h1v1h-1zM267 636h1v1h-1zM409 636h1v1h-1zM579 636h1v1h-1zM267 637h1v1h-1zM409 637h1v1h-1zM579 637h1v1h-1zM267 638h1v1h-1zM409 638h1v1h-1zM579 638h1v1h-1zM267 639h1v1h-1zM409 639h1v1h-1zM579 639h1v1h-1zM267 640h1v1h-1zM409 640h1v1h-1zM579 640h1v1h-1zM267 641h1v1h-1zM409 641h1v1h-1zM579 641h1v1h-1zM267 642h1v1h-1zM409 642h1v1h-1zM579 642h1v1h-1zM267 643h1v1h-1zM409 643h1v1h-1zM579 643h1v1h-1zM267 644h1v1h-1zM409 644h1v1h-1zM579 644h1v1h-1zM267 645h1v1h-1zM409 645h1v1h-1zM579 645h1v1h-1zM267 646h1v1h-1zM409 646h1v1h-1zM494 646h1v1h-1zM579 646h1v1h-1zM267 647h1v1h-1zM409 647h1v1h-1zM494 647h1v1h-1zM579 647h1v1h-1zM267 648h1v1h-1zM409 648h1v1h-1zM494 648h1v1h-1zM579 648h1v1h-1zM267 649h1v1h-1zM409 649h1v1h-1zM494 649h1v1h-1zM579 649h1v1h-1zM267 650h1v1h-1zM409 650h1v1h-1zM494 650h1v1h-1zM579 650h1v1h-1zM267 651h1v1h-1zM409 651h1v1h-1zM494 651h1v1h-1zM579 651h1v1h-1zM267 652h1v1h-1zM409 652h1v1h-1zM494 652h1v1h-1zM579 652h1v1h-1zM267 653h1v1h-1zM409 653h1v1h-1zM494 653h1v1h-1zM579 653h1v1h-1zM267 654h1v1h-1zM409 654h1v1h-1zM494 654h1v1h-1zM579 654h1v1h-1zM267 655h1v1h-1zM409 655h1v1h-1zM494 655h1v1h-1zM540 655h23v1h-23zM579 655h1v1h-1zM409 656h1v1h-1zM494 656h1v1h-1zM541 656h1v1h-1zM561 656h1v1h-1zM579 656h1v1h-1zM409 657h1v1h-1zM494 657h1v1h-1zM542 657h1v1h-1zM560 657h1v1h-1zM579 657h1v1h-1zM409 658h1v1h-1zM494 658h1v1h-1zM543 658h1v1h-1zM559 658h1v1h-1zM579 658h1v1h-1zM409 659h1v1h-1zM494 659h1v1h-1zM544 659h1v1h-1zM558 659h1v1h-1zM579 659h1v1h-1zM409 660h1v1h-1zM494 660h1v1h-1zM545 660h1v1h-1zM557 660h1v1h-1zM579 660h1v1h-1zM409 661h1v1h-1zM494 661h1v1h-1zM546 661h1v1h-1zM556 661h1v1h-1zM579 661h1v1h-1zM409 662h1v1h-1zM494 662h1v1h-1zM547 662h1v1h-1zM555 662h1v1h-1zM579 662h1v1h-1zM409 663h1v1h-1zM494 663h1v1h-1zM548 663h1v1h-1zM554 663h1v1h-1zM579 663h1v1h-1zM409 664h1v1h-1zM494 664h1v1h-1zM549 664h1v1h-1zM553 664h1v1h-1zM579 664h1v1h-1zM409 665h1v1h-1zM494 665h1v1h-1zM550 665h1v1h-1zM552 665h1v1h-1zM579 665h1v1h-1zM409 666h1v1h-1zM551 666h1v1h-1zM579 666h1v1h-1zM409 667h1v1h-1zM579 667h1v1h-1zM409 668h1v1h-1zM579 668h1v1h-1zM409 669h1v1h-1zM579 669h1v1h-1zM409 670h1v1h-1zM579 670h1v1h-1zM409 671h1v1h-1zM579 671h1v1h-1zM409 672h1v1h-1zM579 672h1v1h-1zM409 673h1v1h-1zM579 673h1v1h-1zM409 674h1v1h-1zM579 674h1v1h-1zM409 675h1v1h-1zM579 675h1v1h-1zM409 676h1v1h-1zM579 676h1v1h-1zM409 677h1v1h-1zM579 677h1v1h-1zM409 678h1v1h-1zM579 678h1v1h-1zM409 679h1v1h-1zM579 679h1v1h-1zM409 680h1v1h-1zM579 680h1v1h-1zM409 681h1v1h-1zM579 681h1v1h-1zM409 682h1v1h-1zM579 682h1v1h-1zM409 683h1v1h-1zM579 683h1v1h-1zM409 684h1v1h-1zM579 684h1v1h-1zM409 685h1v1h-1zM579 685h1v1h-1zM409 686h1v1h-1zM579 686h1v1h-1zM409 687h1v1h-1zM579 687h1v1h-1zM409 688h1v1h-1zM579 688h1v1h-1zM409 689h1v1h-1zM579 689h1v1h-1zM409 690h1v1h-1zM579 690h1v1h-1zM409 691h1v1h-1zM579 691h1v1h-1zM409 692h1v1h-1zM579 692h1v1h-1zM343 693h20v1h-20zM400 693h57v1h-57zM579 693h1v1h-1zM343 694h1v1h-1zM409 694h1v1h-1zM579 694h1v1h-1zM343 695h1v1h-1zM409 695h1v1h-1zM579 695h1v1h-1zM343 696h1v1h-1zM409 696h1v1h-1zM579 696h1v1h-1zM343 697h1v1h-1zM409 697h1v1h-1zM579 697h1v1h-1zM343 698h1v1h-1zM409 698h1v1h-1zM579 698h1v1h-1zM343 699h1v1h-1zM409 699h1v1h-1zM579 699h1v1h-1zM343 700h1v1h-1zM409 700h1v1h-1zM579 700h1v1h-1zM343 701h1v1h-1zM409 701h1v1h-1zM579 701h1v1h-1zM267 702h1v1h-1zM343 702h1v1h-1zM409 702h1v1h-1zM579 702h1v1h-1zM267 703h1v1h-1zM343 703h1v1h-1zM409 703h1v1h-1zM579 703h1v1h-1zM267 704h1v1h-1zM343 704h1v1h-1zM409 704h1v1h-1zM579 704h1v1h-1zM267 705h1v1h-1zM343 705h1v1h-1zM409 705h1v1h-1zM579 705h1v1h-1zM267 706h1v1h-1zM343 706h1v1h-1zM409 706h1v1h-1zM579 706h1v1h-1zM267 707h1v1h-1zM343 707h1v1h-1zM409 707h1v1h-1zM579 707h1v1h-1zM267 708h1v1h-1zM343 708h1v1h-1zM409 708h1v1h-1zM579 708h1v1h-1zM267 709h1v1h-1zM343 709h1v1h-1zM409 709h1v1h-1zM579 709h1v1h-1zM267 710h1v1h-1zM343 710h1v1h-1zM409 710h1v1h-1zM579 710h1v1h-1zM267 711h1v1h-1zM343 711h1v1h-1zM409 711h1v1h-1zM579 711h1v1h-1zM267 712h1v1h-1zM343 712h1v1h-1zM409 712h1v1h-1zM579 712h1v1h-1zM267 713h1v1h-1zM409 713h1v1h-1zM579 713h1v1h-1zM267 714h1v1h-1zM409 714h1v1h-1zM579 714h1v1h-1zM267 715h1v1h-1zM409 715h1v1h-1zM579 715h1v1h-1zM267 716h1v1h-1zM409 716h1v1h-1zM579 716h1v1h-1zM267 717h1v1h-1zM409 717h1v1h-1zM579 717h1v1h-1zM267 718h1v1h-1zM409 718h1v1h-1zM579 718h1v1h-1zM267 719h1v1h-1zM409 719h1v1h-1zM579 719h1v1h-1zM267 720h1v1h-1zM409 720h1v1h-1zM579 720h1v1h-1zM256 721h23v1h-23zM409 721h1v1h-1zM494 721h1v1h-1zM579 721h1v1h-1zM257 722h1v1h-1zM277 722h1v1h-1zM494 722h1v1h-1zM579 722h1v1h-1zM258 723h1v1h-1zM276 723h1v1h-1zM494 723h1v1h-1zM579 723h1v1h-1zM259 724h1v1h-1zM275 724h1v1h-1zM494 724h1v1h-1zM579 724h1v1h-1zM260 725h1v1h-1zM274 725h1v1h-1zM494 725h1v1h-1zM579 725h1v1h-1zM261 726h1v1h-1zM273 726h1v1h-1zM494 726h1v1h-1zM579 726h1v1h-1zM262 727h1v1h-1zM272 727h1v1h-1zM494 727h1v1h-1zM579 727h1v1h-1zM263 728h1v1h-1zM271 728h1v1h-1zM494 728h1v1h-1zM579 728h1v1h-1zM264 729h1v1h-1zM270 729h1v1h-1zM494 729h1v1h-1zM579 729h1v1h-1zM265 730h1v1h-1zM269 730h1v1h-1zM494 730h1v1h-1zM579 730h1v1h-1zM266 731h1v1h-1zM268 731h1v1h-1zM494 731h1v1h-1zM579 731h1v1h-1zM267 732h1v1h-1zM494 732h1v1h-1zM579 732h1v1h-1zM494 733h1v1h-1zM579 733h1v1h-1zM494 734h1v1h-1zM579 734h1v1h-1zM494 735h1v1h-1zM579 735h1v1h-1zM494 736h1v1h-1zM579 736h1v1h-1zM494 737h1v1h-1zM579 737h1v1h-1zM494 738h1v1h-1zM579 738h1v1h-1zM494 739h1v1h-1zM579 739h1v1h-1zM494 740h1v1h-1zM579 740h1v1h-1zM343 759h1v1h-1zM343 760h1v1h-1zM343 761h1v1h-1zM343 762h1v1h-1zM343 763h1v1h-1zM343 764h1v1h-1zM343 765h1v1h-1zM343 766h1v1h-1zM343 767h1v1h-1zM343 768h1v1h-1zM343 769h1v1h-1zM409 769h1v1h-1zM343 770h1v1h-1zM409 770h1v1h-1zM343 771h1v1h-1zM409 771h1v1h-1zM343 772h1v1h-1zM409 772h1v1h-1zM343 773h1v1h-1zM409 773h1v1h-1zM343 774h1v1h-1zM409 774h1v1h-1zM343 775h1v1h-1zM409 775h1v1h-1zM343 776h1v1h-1zM409 776h1v1h-1zM343 777h1v1h-1zM409 777h1v1h-1zM332 778h23v1h-23zM409 778h1v1h-1zM333 779h1v1h-1zM353 779h1v1h-1zM409 779h1v1h-1zM334 780h1v1h-1zM352 780h1v1h-1zM409 780h1v1h-1zM335 781h1v1h-1zM351 781h1v1h-1zM409 781h1v1h-1zM336 782h1v1h-1zM350 782h1v1h-1zM409 782h1v1h-1zM337 783h1v1h-1zM349 783h1v1h-1zM409 783h1v1h-1zM338 784h1v1h-1zM348 784h1v1h-1zM409 784h1v1h-1zM339 785h1v1h-1zM347 785h1v1h-1zM409 785h1v1h-1zM340 786h1v1h-1zM346 786h1v1h-1zM409 786h1v1h-1zM341 787h1v1h-1zM345 787h1v1h-1zM398 787h23v1h-23zM494 787h1v1h-1zM579 787h1v1h-1zM342 788h1v1h-1zM344 788h1v1h-1zM399 788h1v1h-1zM419 788h1v1h-1zM494 788h1v1h-1zM579 788h1v1h-1zM343 789h1v1h-1zM400 789h1v1h-1zM418 789h1v1h-1zM494 789h1v1h-1zM579 789h1v1h-1zM401 790h1v1h-1zM417 790h1v1h-1zM494 790h1v1h-1zM579 790h1v1h-1zM402 791h1v1h-1zM416 791h1v1h-1zM494 791h1v1h-1zM579 791h1v1h-1zM403 792h1v1h-1zM415 792h1v1h-1zM494 792h1v1h-1zM579 792h1v1h-1zM404 793h1v1h-1zM414 793h1v1h-1zM494 793h1v1h-1zM579 793h1v1h-1zM405 794h1v1h-1zM413 794h1v1h-1zM494 794h1v1h-1zM579 794h1v1h-1zM406 795h1v1h-1zM412 795h1v1h-1zM494 795h1v1h-1zM579 795h1v1h-1zM407 796h1v1h-1zM411 796h1v1h-1zM494 796h1v1h-1zM579 796h1v1h-1zM408 797h1v1h-1zM410 797h1v1h-1zM494 797h39v1h-39zM579 797h1v1h-1zM409 798h1v1h-1zM494 798h1v1h-1zM532 798h1v1h-1zM579 798h1v1h-1zM494 799h1v1h-1zM532 799h1v1h-1zM579 799h1v1h-1zM494 800h1v1h-1zM532 800h1v1h-1zM579 800h1v1h-1zM494 801h1v1h-1zM532 801h1v1h-1zM579 801h1v1h-1zM494 802h1v1h-1zM532 802h1v1h-1zM579 802h1v1h-1zM494 803h1v1h-1zM532 803h1v1h-1zM579 803h1v1h-1zM494 804h1v1h-1zM532 804h1v1h-1zM579 804h1v1h-1zM494 805h1v1h-1zM532 805h1v1h-1zM579 805h1v1h-1zM494 806h1v1h-1zM532 806h1v1h-1zM579 806h1v1h-1zM532 807h1v1h-1zM579 807h1v1h-1zM532 808h1v1h-1zM579 808h1v1h-1zM532 809h1v1h-1zM579 809h1v1h-1zM532 810h1v1h-1zM579 810h1v1h-1zM532 811h1v1h-1zM579 811h1v1h-1zM532 812h1v1h-1zM579 812h1v1h-1zM532 813h1v1h-1zM579 813h1v1h-1zM532 814h1v1h-1zM579 814h1v1h-1zM532 815h1v1h-1zM579 815h1v1h-1zM532 816h1v1h-1zM579 816h1v1h-1zM579 817h1v1h-1zM579 818h1v1h-1zM579 819h1v1h-1zM579 820h1v1h-1zM579 821h1v1h-1zM579 822h1v1h-1zM579 823h1v1h-1zM579 824h1v1h-1zM579 825h1v1h-1zM579 826h1v1h-1zM579 827h1v1h-1zM579 828h1v1h-1zM579 829h1v1h-1zM579 830h1v1h-1zM579 831h1v1h-1zM579 832h1v1h-1zM579 833h1v1h-1zM579 834h1v1h-1zM579 835h1v1h-1zM579 836h1v1h-1zM579 837h1v1h-1zM579 838h1v1h-1zM579 839h1v1h-1zM579 840h1v1h-1zM579 841h1v1h-1zM579 842h1v1h-1zM579 843h1v1h-1zM579 844h1v1h-1zM579 845h1v1h-1zM579 846h1v1h-1zM579 847h1v1h-1zM579 848h1v1h-1zM579 849h1v1h-1zM579 850h1v1h-1zM579 851h1v1h-1zM579 852h1v1h-1zM579 853h1v1h-1zM494 854h1v1h-1zM532 854h1v1h-1zM579 854h1v1h-1zM494 855h1v1h-1zM532 855h1v1h-1zM579 855h1v1h-1zM494 856h1v1h-1zM532 856h1v1h-1zM579 856h1v1h-1zM494 857h1v1h-1zM532 857h1v1h-1zM579 857h1v1h-1zM494 858h1v1h-1zM532 858h1v1h-1zM579 858h1v1h-1zM494 859h1v1h-1zM532 859h1v1h-1zM579 859h1v1h-1zM494 860h1v1h-1zM532 860h1v1h-1zM579 860h1v1h-1zM494 861h1v1h-1zM532 861h1v1h-1zM579 861h1v1h-1zM494 862h1v1h-1zM532 862h1v1h-1zM579 862h1v1h-1zM494 863h39v1h-39zM579 863h1v1h-1zM494 864h1v1h-1zM579 864h1v1h-1zM494 865h1v1h-1zM579 865h1v1h-1zM494 866h1v1h-1zM579 866h1v1h-1zM494 867h1v1h-1zM579 867h1v1h-1zM494 868h1v1h-1zM579 868h1v1h-1zM494 869h1v1h-1zM579 869h1v1h-1zM494 870h1v1h-1zM579 870h1v1h-1zM494 871h1v1h-1zM579 871h1v1h-1zM494 872h1v1h-1zM579 872h1v1h-1zM483 873h23v1h-23zM568 873h23v1h-23zM484 874h1v1h-1zM504 874h1v1h-1zM569 874h1v1h-1zM589 874h1v1h-1zM485 875h1v1h-1zM503 875h1v1h-1zM570 875h1v1h-1zM588 875h1v1h-1zM486 876h1v1h-1zM502 876h1v1h-1zM571 876h1v1h-1zM587 876h1v1h-1zM487 877h1v1h-1zM501 877h1v1h-1zM572 877h1v1h-1zM586 877h1v1h-1zM488 878h1v1h-1zM500 878h1v1h-1zM573 878h1v1h-1zM585 878h1v1h-1zM489 879h1v1h-1zM499 879h1v1h-1zM574 879h1v1h-1zM584 879h1v1h-1zM490 880h1v1h-1zM498 880h1v1h-1zM575 880h1v1h-1zM583 880h1v1h-1zM491 881h1v1h-1zM497 881h1v1h-1zM576 881h1v1h-1zM582 881h1v1h-1zM492 882h1v1h-1zM496 882h1v1h-1zM577 882h1v1h-1zM581 882h1v1h-1zM493 883h1v1h-1zM495 883h1v1h-1zM578 883h1v1h-1zM580 883h1v1h-1zM494 884h1v1h-1zM579 884h1v1h-1z" fill="#0000ff"/><rect x="407" y="492" width="5" height="5" fill="#0000ff"/><rect x="492" y="492" width="5" height="5" fill="#0000ff"/><rect x="492" y="578" width="5" height="5" fill="#0000ff"/><rect x="549" y="615" width="5" height="5" fill="#0000ff"/><rect x="577" y="615" width="5" height="5" fill="#0000ff"/><rect x="407" y="691" width="5" height="5" fill="#0000ff"/><rect x="492" y="795" width="5" height="5" fill="#0000ff"/><rect x="492" y="861" width="5" height="5" fill="#0000ff"/><text transform="translate(505.93,534) scale(1.067,1)" class="sc">Rc</text><text transform="translate(507.00,554) scale(1.000,1)" class="sc">2k</text><text transform="translate(590.87,534) scale(1.133,1)" class="sc">R6</text><text transform="translate(590.89,555) scale(1.107,1)" class="sc">100k</text><text transform="translate(637.00,567) scale(1.062,1)" class="sc">C2</text><text transform="translate(632.85,603) scale(1.150,1)" class="sc">10µ</text><text transform="translate(684.00,586) scale(0.857,1)" class="sc">OUT</text><text transform="translate(482.00,614) scale(1.059,1)" class="sc">Q2</text><text transform="translate(452.00,635) scale(1.022,1)" class="sc">2N3904</text><text transform="translate(556.00,628) scale(1.000,1)" class="sc">C4</text><text transform="translate(555.89,656) scale(1.107,1)" class="sc">100µ</text><text transform="translate(378.94,604) scale(1.062,1)" class="sc">R1</text><text transform="translate(363.89,619) scale(1.107,1)" class="sc">100k</text><text transform="translate(282.00,661) scale(1.062,1)" class="sc">V1</text><text transform="translate(281.77,708) scale(1.231,1)" class="sc">15</text><text transform="translate(334.73,691) scale(1.273,1)" class="sc">IN</text><text transform="translate(373.00,682) scale(0.941,1)" class="sc">C1</text><text transform="translate(368.85,715) scale(1.150,1)" class="sc">10µ</text><text transform="translate(320.00,715) scale(1.000,1)" class="sc">V2</text><text transform="translate(324.00,766) scale(1.000,1)" class="sc">AC 1</text><text transform="translate(489.00,691) scale(1.059,1)" class="sc">Q1</text><text transform="translate(490.00,710) scale(1.022,1)" class="sc">2N3904</text><text transform="translate(419.87,741) scale(1.133,1)" class="sc">R2</text><text transform="translate(422.00,763) scale(1.091,1)" class="sc">22k</text><text transform="translate(504.80,760) scale(1.200,1)" class="sc">Re</text><text transform="translate(506.00,782) scale(1.190,1)" class="sc">200</text><text transform="translate(589.80,760) scale(1.200,1)" class="sc">R7</text><text transform="translate(589.86,782) scale(1.143,1)" class="sc">56k</text><text transform="translate(466.88,827) scale(1.125,1)" class="sc">R4</text><text transform="translate(473.00,847) scale(1.190,1)" class="sc">820</text><text transform="translate(537.00,827) scale(1.062,1)" class="sc">C3</text><text transform="translate(536.89,855) scale(1.107,1)" class="sc">100µ</text><text transform="translate(301.94,824) scale(1.058,1)" class="sc">.ac oct 100 1k 1G</text><text transform="translate(9.70,26.50) scale(1.020,1.089)" class="ax">20dB</text><text transform="translate(9.70,65.50) scale(1.020,1.089)" class="ax">16dB</text><text transform="translate(9.70,103.50) scale(1.020,1.089)" class="ax">12dB</text><text transform="translate(16.84,142.50) scale(1.020,1.089)" class="ax">8dB</text><text transform="translate(16.84,180.50) scale(1.020,1.089)" class="ax">4dB</text><text transform="translate(16.84,219.50) scale(1.020,1.089)" class="ax">0dB</text><text transform="translate(12.76,257.50) scale(1.020,1.089)" class="ax">-4dB</text><text transform="translate(12.76,296.50) scale(1.020,1.089)" class="ax">-8dB</text><text transform="translate(5.62,334.50) scale(1.020,1.089)" class="ax">-12dB</text><text transform="translate(5.62,373.50) scale(1.020,1.089)" class="ax">-16dB</text><text transform="translate(5.62,411.50) scale(1.020,1.089)" class="ax">-20dB</text><text transform="translate(5.62,450.50) scale(1.020,1.089)" class="ax">-24dB</text><text transform="translate(811.00,26.50) scale(1.000,1.089)" class="ax">-150°</text><text transform="translate(811.00,68.50) scale(1.000,1.089)" class="ax">-180°</text><text transform="translate(811.00,111.50) scale(1.000,1.089)" class="ax">-210°</text><text transform="translate(811.00,153.50) scale(1.000,1.089)" class="ax">-240°</text><text transform="translate(811.00,196.50) scale(1.000,1.089)" class="ax">-270°</text><text transform="translate(811.00,238.50) scale(1.000,1.089)" class="ax">-300°</text><text transform="translate(811.00,280.50) scale(1.000,1.089)" class="ax">-330°</text><text transform="translate(811.00,323.50) scale(1.000,1.089)" class="ax">-360°</text><text transform="translate(811.00,365.50) scale(1.000,1.089)" class="ax">-390°</text><text transform="translate(811.00,408.50) scale(1.000,1.089)" class="ax">-420°</text><text transform="translate(811.00,450.50) scale(1.000,1.089)" class="ax">-450°</text><text transform="translate(33.00,466.60) scale(1.000,1.089)" class="ax">1KHz</text><text transform="translate(155.50,466.60) scale(1.000,1.089)" class="ax">10KHz</text><text transform="translate(276.50,466.60) scale(1.000,1.089)" class="ax">100KHz</text><text transform="translate(409.00,466.60) scale(1.000,1.089)" class="ax">1MHz</text><text transform="translate(531.00,466.60) scale(1.000,1.089)" class="ax">10MHz</text><text transform="translate(652.50,466.60) scale(1.000,1.089)" class="ax">100MHz</text><text transform="translate(786.00,466.60) scale(1.000,1.089)" class="ax">1GHz</text><text transform="translate(406.00,18.00) scale(1.000,1.100)" class="title">V(out)</text>
</svg>
</body></html>
